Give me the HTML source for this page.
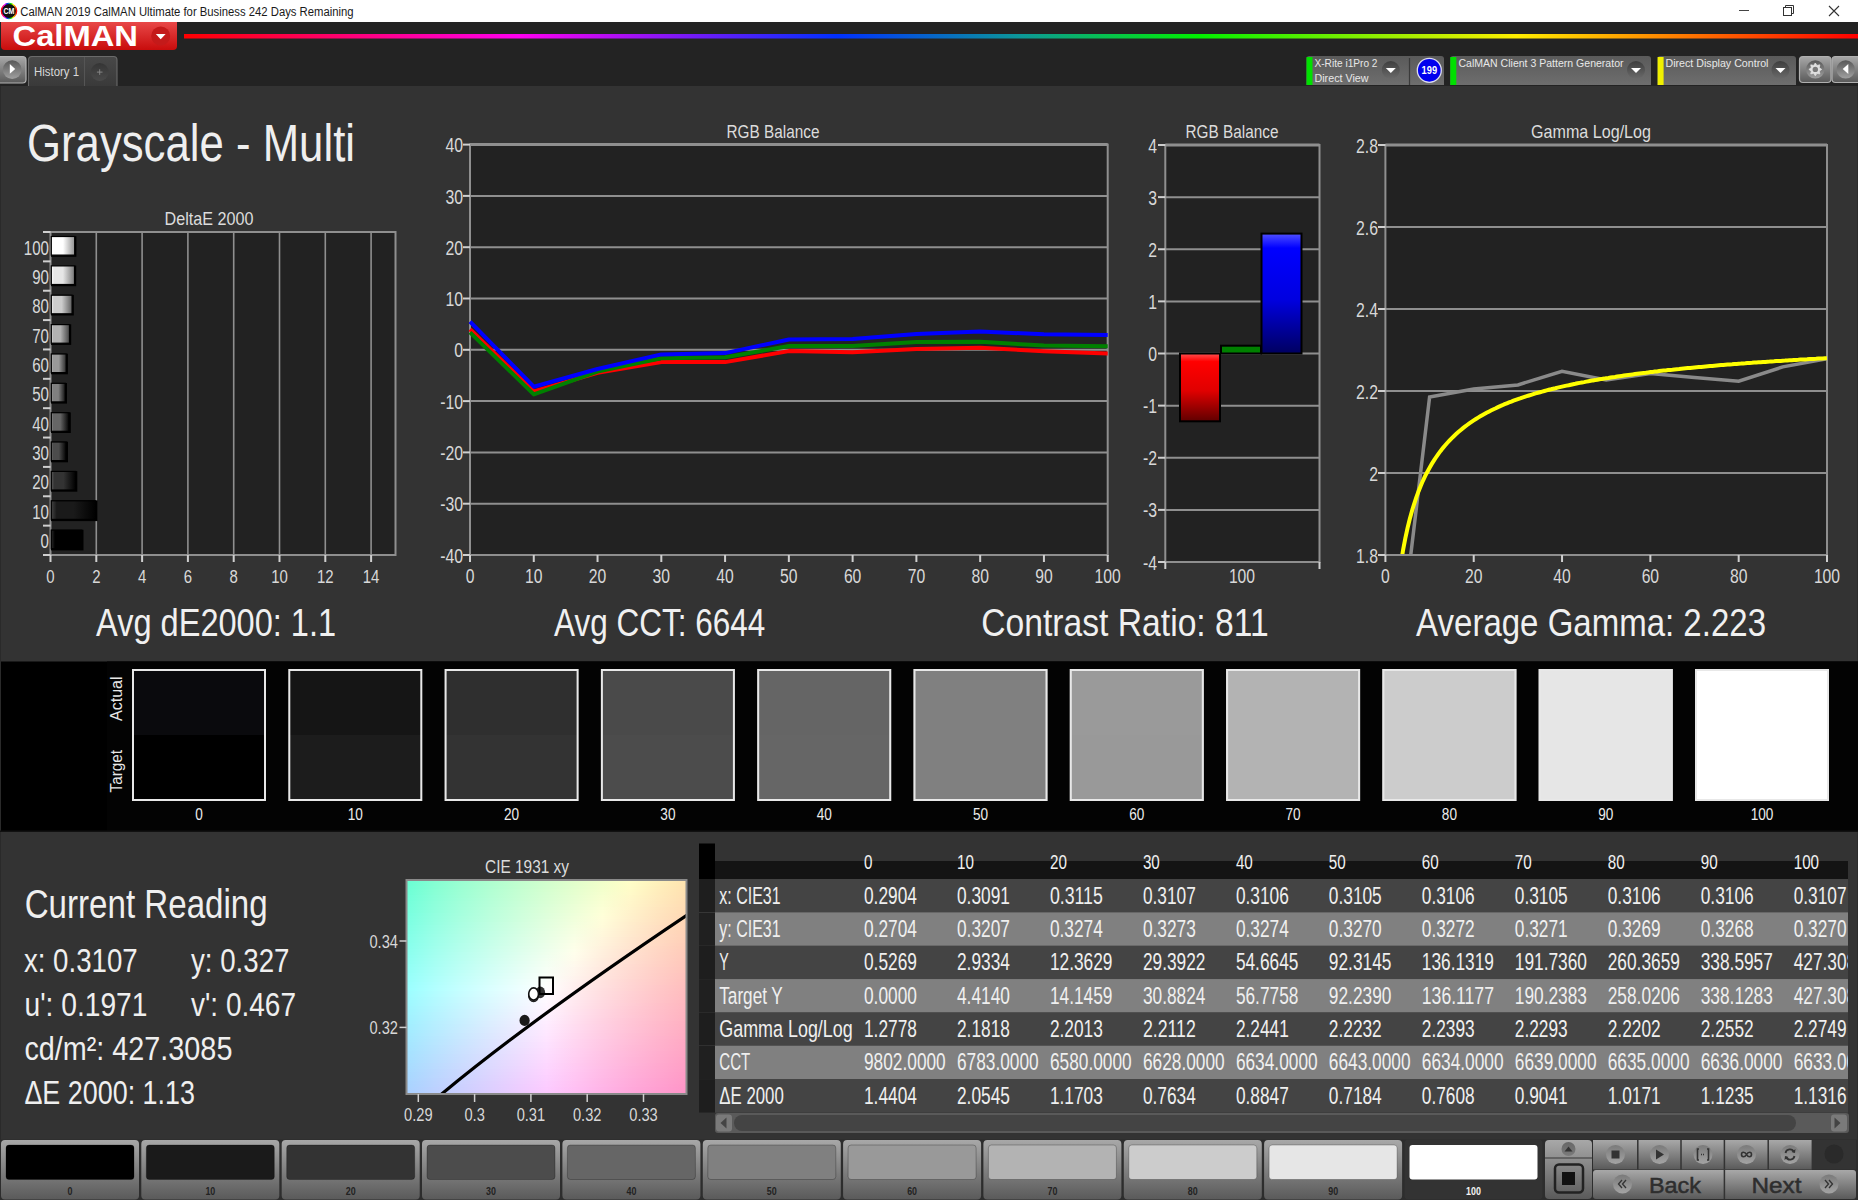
<!DOCTYPE html>
<html><head><meta charset="utf-8"><title>CalMAN</title>
<style>html,body{margin:0;padding:0;background:#232323;overflow:hidden}
svg{display:block;font-family:"Liberation Sans",sans-serif}</style></head>
<body><svg width="1858" height="1200" viewBox="0 0 1858 1200">
<defs>
<linearGradient id="rainbow" x1="0" x2="1" y1="0" y2="0">
<stop offset="0" stop-color="#ff0000"/><stop offset="0.2" stop-color="#ff00f0"/>
<stop offset="0.39" stop-color="#0030ff"/><stop offset="0.5" stop-color="#0c9898"/>
<stop offset="0.606" stop-color="#00f000"/><stop offset="0.796" stop-color="#ffee00"/>
<stop offset="0.89" stop-color="#ff8000"/><stop offset="1" stop-color="#ff0000"/></linearGradient>
<linearGradient id="logo" x1="0" x2="0" y1="0" y2="1">
<stop offset="0" stop-color="#e84848"/><stop offset="1" stop-color="#c80c0c"/></linearGradient>
<linearGradient id="redbar" x1="0" x2="0" y1="0" y2="1">
<stop offset="0" stop-color="#ff5050"/><stop offset="0.12" stop-color="#ff0000"/><stop offset="0.55" stop-color="#e00000"/><stop offset="1" stop-color="#600000"/></linearGradient>
<linearGradient id="bluebar" x1="0" x2="0" y1="0" y2="1">
<stop offset="0" stop-color="#5050ff"/><stop offset="0.12" stop-color="#0000ff"/><stop offset="0.55" stop-color="#0000e0"/><stop offset="1" stop-color="#000060"/></linearGradient>
<linearGradient id="btn" x1="0" x2="0" y1="0" y2="1">
<stop offset="0" stop-color="#a8a8a8"/><stop offset="1" stop-color="#5a5a5a"/></linearGradient>
<linearGradient id="tbox" x1="0" x2="0" y1="0" y2="1">
<stop offset="0" stop-color="#5a5a5a"/><stop offset="1" stop-color="#6e6e6e"/></linearGradient>
<linearGradient id="tabg" x1="0" x2="0" y1="0" y2="1">
<stop offset="0" stop-color="#484848"/><stop offset="1" stop-color="#3a3a3a"/></linearGradient>
<linearGradient id="knob" x1="0" x2="0" y1="0" y2="1">
<stop offset="0" stop-color="#3e3e3e"/><stop offset="1" stop-color="#6a6a6a"/></linearGradient>
<linearGradient id="knobl" x1="0" x2="0" y1="0" y2="1">
<stop offset="0" stop-color="#7a7a7a"/><stop offset="1" stop-color="#b0b0b0"/></linearGradient>
<linearGradient id="hdr" x1="0" x2="0" y1="0" y2="1">
<stop offset="0" stop-color="#333333"/><stop offset="0.5" stop-color="#333333"/><stop offset="0.5" stop-color="#141414"/><stop offset="1" stop-color="#141414"/></linearGradient>
<filter id="blur6" x="-5%" y="-5%" width="110%" height="110%"><feGaussianBlur stdDeviation="6"/></filter>
<clipPath id="cieclip"><rect x="407" y="881" width="279" height="212"/></clipPath>
<clipPath id="gamclip"><rect x="1386" y="146" width="441" height="408"/></clipPath>
<clipPath id="tblclip"><rect x="699" y="843" width="1149" height="272"/></clipPath>
<linearGradient id="knob2" x1="0" x2="0" y1="0" y2="1">
<stop offset="0" stop-color="#585858"/><stop offset="1" stop-color="#a0a0a0"/></linearGradient>
<linearGradient id="knobd" x1="0" x2="0" y1="0" y2="1">
<stop offset="0" stop-color="#353535"/><stop offset="1" stop-color="#4a4a4a"/></linearGradient>
<linearGradient id="knobb" x1="0" x2="0" y1="0" y2="1">
<stop offset="0" stop-color="#7a7a7a"/><stop offset="1" stop-color="#a4a4a4"/></linearGradient>
</defs>
<rect x="0" y="0" width="1858" height="1200" fill="#232323"/>
<rect x="0" y="0" width="1858" height="22" fill="#ffffff"/>
<rect x="0" y="86" width="1858" height="1114" fill="#333333"/>
<rect x="0" y="86" width="1" height="1114" fill="#2a2a2a"/>
<rect x="1857" y="86" width="1" height="1114" fill="#2c2c2c"/>
<circle cx="9" cy="11" r="7.6" fill="#111" stroke="url(#rainbow)" stroke-width="1.4"/>
<text x="9.00" y="13.60" font-size="8.43" fill="#fff" text-anchor="middle" font-weight="bold" textLength="11.00" lengthAdjust="spacingAndGlyphs">CM</text>
<text x="20.30" y="15.70" font-size="12.21" fill="#1a1a1a" textLength="333.30" lengthAdjust="spacingAndGlyphs">CalMAN 2019 CalMAN Ultimate for Business 242 Days Remaining</text>
<line x1="1739" y1="10.5" x2="1749" y2="10.5" stroke="#444" stroke-width="1"/>
<rect x="1783.5" y="7.5" width="8" height="8" fill="none" stroke="#333" stroke-width="1"/>
<path d="M1785.5 7.5 V5.5 H1793.5 V13.5 H1791.5" fill="none" stroke="#333" stroke-width="1"/>
<path d="M1829 6 L1839 16 M1839 6 L1829 16" stroke="#333" stroke-width="1.1"/>
<path d="M1 22 H177 V46 Q177 50 173 50 H5 Q1 50 1 46 Z" fill="url(#logo)"/>
<text x="12.50" y="46.30" font-size="29.94" fill="#ffffff" font-weight="bold" textLength="125.50" lengthAdjust="spacingAndGlyphs">CalMAN</text>
<circle cx="160.7" cy="36" r="9.5" fill="#c41a1a"/>
<path d="M155.8 34 H165.6 L160.7 39.3 Z" fill="#fff"/>
<rect x="184" y="34" width="1674" height="4.5" fill="url(#rainbow)"/>
<rect x="-4" y="56.5" width="30" height="26.5" rx="3.5" fill="url(#btn)" stroke="#b4b4b4" stroke-width="1.2"/>
<circle cx="12.2" cy="69.6" r="9.4" fill="url(#knob2)"/>
<path d="M9.8 64 L15.2 69 L9.8 73.8 Z" fill="#fff"/>
<path d="M28.5 86 V60 Q28.5 56.5 32 56.5 H113.5 Q117 56.5 117 60 V86" fill="url(#tabg)" stroke="#6a6a6a" stroke-width="1.1"/>
<line x1="84.5" y1="57" x2="84.5" y2="86" stroke="#555" stroke-width="1"/>
<text x="34.00" y="75.50" font-size="13.37" fill="#d8d8d8" textLength="45.00" lengthAdjust="spacingAndGlyphs">History 1</text>
<circle cx="99.7" cy="72" r="9" fill="url(#knobd)"/>
<path d="M99.7 69.3 V74.9 M96.9 72.1 H102.5" stroke="#8a8a8a" stroke-width="0.9"/>
<path d="M1306.5 85 V59 Q1306.5 56 1309.5 56 H1441 Q1444 56 1444 59 V85 Z" fill="url(#tbox)"/>
<rect x="1306.5" y="57" width="6" height="28" fill="#00e000"/>
<text x="1314.50" y="67.20" font-size="10.17" fill="#e8e8e8" textLength="63.00" lengthAdjust="spacingAndGlyphs">X-Rite i1Pro 2</text>
<text x="1314.50" y="81.50" font-size="10.17" fill="#e8e8e8" textLength="54.00" lengthAdjust="spacingAndGlyphs">Direct View</text>
<circle cx="1390.8" cy="70" r="9" fill="url(#knob)"/>
<path d="M1385.8 68 H1395.8 L1390.8 73 Z" fill="#fff"/>
<line x1="1409.5" y1="58" x2="1409.5" y2="85" stroke="#3a3a3a" stroke-width="1.2"/>
<circle cx="1429.3" cy="70.3" r="12" fill="#0000ee" stroke="#dde" stroke-width="1.3"/>
<text x="1429.30" y="74.30" font-size="10.90" fill="#fff" text-anchor="middle" font-weight="bold" textLength="15.50" lengthAdjust="spacingAndGlyphs">199</text>
<path d="M1450.3 85 V59 Q1450.3 56 1453.3 56 H1648 Q1651 56 1651 59 V85 Z" fill="url(#tbox)"/>
<rect x="1450.3" y="57" width="6" height="28" fill="#00e000"/>
<text x="1458.50" y="67.20" font-size="10.17" fill="#e8e8e8" textLength="165.00" lengthAdjust="spacingAndGlyphs">CalMAN Client 3 Pattern Generator</text>
<circle cx="1636" cy="70" r="9" fill="url(#knob)"/>
<path d="M1631 68 H1641 L1636 73 Z" fill="#fff"/>
<path d="M1657.6 85 V59 Q1657.6 56 1660.6 56 H1793 Q1796 56 1796 59 V85 Z" fill="url(#tbox)"/>
<rect x="1657.6" y="57" width="6" height="28" fill="#f0f000"/>
<text x="1665.50" y="67.20" font-size="10.17" fill="#e8e8e8" textLength="103.00" lengthAdjust="spacingAndGlyphs">Direct Display Control</text>
<circle cx="1780.5" cy="70" r="9" fill="url(#knob)"/>
<path d="M1775.5 68 H1785.5 L1780.5 73 Z" fill="#fff"/>
<rect x="1799.5" y="56.5" width="31.5" height="26" rx="3.5" fill="url(#btn)" stroke="#b0b0b0" stroke-width="1.2"/>
<circle cx="1815.3" cy="69.4" r="9.2" fill="url(#knob2)"/>
<path d="M1815.30 63.00 L1816.95 65.43 L1819.83 64.87 L1819.27 67.75 L1821.70 69.40 L1819.27 71.05 L1819.83 73.93 L1816.95 73.37 L1815.30 75.80 L1813.65 73.37 L1810.77 73.93 L1811.33 71.05 L1808.90 69.40 L1811.33 67.75 L1810.77 64.87 L1813.65 65.43 Z" fill="#e0e0e0" stroke="#e0e0e0" stroke-width="0.8" stroke-linejoin="round"/>
<circle cx="1815.3" cy="69.4" r="2.7" fill="#7a7a7a"/>
<rect x="1832" y="56.5" width="31" height="26" rx="3.5" fill="url(#btn)" stroke="#b0b0b0" stroke-width="1.2"/>
<circle cx="1845.7" cy="69.4" r="9.2" fill="url(#knob2)"/>
<path d="M1848.3 63.9 V73.9 L1842.7 68.9 Z" fill="#fff"/>
<text x="27.00" y="160.60" font-size="51.45" fill="#efefef" textLength="328.00" lengthAdjust="spacingAndGlyphs">Grayscale - Multi</text>
<text x="209.00" y="224.50" font-size="18.02" fill="#dcdcdc" text-anchor="middle" textLength="89.00" lengthAdjust="spacingAndGlyphs">DeltaE 2000</text>
<rect x="50.5" y="232" width="345.0" height="323" fill="#222222"/>
<line x1="96.3" y1="232" x2="96.3" y2="555" stroke="#8f8f8f" stroke-width="1.6"/>
<line x1="142.1" y1="232" x2="142.1" y2="555" stroke="#8f8f8f" stroke-width="1.6"/>
<line x1="187.89999999999998" y1="232" x2="187.89999999999998" y2="555" stroke="#8f8f8f" stroke-width="1.6"/>
<line x1="233.7" y1="232" x2="233.7" y2="555" stroke="#8f8f8f" stroke-width="1.6"/>
<line x1="279.5" y1="232" x2="279.5" y2="555" stroke="#8f8f8f" stroke-width="1.6"/>
<line x1="325.29999999999995" y1="232" x2="325.29999999999995" y2="555" stroke="#8f8f8f" stroke-width="1.6"/>
<line x1="371.09999999999997" y1="232" x2="371.09999999999997" y2="555" stroke="#8f8f8f" stroke-width="1.6"/>
<rect x="50.5" y="232" width="345.0" height="323" fill="none" stroke="#8f8f8f" stroke-width="2"/>
<linearGradient id="bar100" x1="0" x2="1" y1="0" y2="0"><stop offset="0" stop-color="rgb(255,255,255)"/><stop offset="0.12" stop-color="rgb(255,255,255)"/><stop offset="0.5" stop-color="rgb(255,255,255)"/><stop offset="1" stop-color="rgb(145,145,145)"/></linearGradient>
<rect x="52.0" y="237.2" width="23.4" height="18.6" fill="#000" stroke="#000" stroke-width="2"/>
<rect x="51.3" y="236.5" width="23.4" height="18.6" fill="url(#bar100)" stroke="#000" stroke-width="1.2"/>
<line x1="43" y1="232.0" x2="50.5" y2="232.0" stroke="#cfcfcf" stroke-width="2"/>
<text x="49.00" y="254.58" font-size="19.33" fill="#d8d8d8" text-anchor="end" textLength="25.16" lengthAdjust="spacingAndGlyphs">100</text>
<linearGradient id="bar90" x1="0" x2="1" y1="0" y2="0"><stop offset="0" stop-color="rgb(255,255,255)"/><stop offset="0.12" stop-color="rgb(230,230,230)"/><stop offset="0.5" stop-color="rgb(230,230,230)"/><stop offset="1" stop-color="rgb(120,120,120)"/></linearGradient>
<rect x="52.0" y="266.6" width="23.2" height="18.6" fill="#000" stroke="#000" stroke-width="2"/>
<rect x="51.3" y="265.9" width="23.2" height="18.6" fill="url(#bar90)" stroke="#000" stroke-width="1.2"/>
<line x1="43" y1="261.3636363636364" x2="50.5" y2="261.3636363636364" stroke="#cfcfcf" stroke-width="2"/>
<text x="49.00" y="283.95" font-size="19.33" fill="#d8d8d8" text-anchor="end" textLength="16.77" lengthAdjust="spacingAndGlyphs">90</text>
<linearGradient id="bar80" x1="0" x2="1" y1="0" y2="0"><stop offset="0" stop-color="rgb(244,244,244)"/><stop offset="0.12" stop-color="rgb(204,204,204)"/><stop offset="0.5" stop-color="rgb(204,204,204)"/><stop offset="1" stop-color="rgb(94,94,94)"/></linearGradient>
<rect x="52.0" y="295.9" width="20.8" height="18.6" fill="#000" stroke="#000" stroke-width="2"/>
<rect x="51.3" y="295.2" width="20.8" height="18.6" fill="url(#bar80)" stroke="#000" stroke-width="1.2"/>
<line x1="43" y1="290.72727272727275" x2="50.5" y2="290.72727272727275" stroke="#cfcfcf" stroke-width="2"/>
<text x="49.00" y="313.31" font-size="19.33" fill="#d8d8d8" text-anchor="end" textLength="16.77" lengthAdjust="spacingAndGlyphs">80</text>
<linearGradient id="bar70" x1="0" x2="1" y1="0" y2="0"><stop offset="0" stop-color="rgb(218,218,218)"/><stop offset="0.12" stop-color="rgb(178,178,178)"/><stop offset="0.5" stop-color="rgb(178,178,178)"/><stop offset="1" stop-color="rgb(68,68,68)"/></linearGradient>
<rect x="52.0" y="325.3" width="18.2" height="18.6" fill="#000" stroke="#000" stroke-width="2"/>
<rect x="51.3" y="324.6" width="18.2" height="18.6" fill="url(#bar70)" stroke="#000" stroke-width="1.2"/>
<line x1="43" y1="320.0909090909091" x2="50.5" y2="320.0909090909091" stroke="#cfcfcf" stroke-width="2"/>
<text x="49.00" y="342.67" font-size="19.33" fill="#d8d8d8" text-anchor="end" textLength="16.77" lengthAdjust="spacingAndGlyphs">70</text>
<linearGradient id="bar60" x1="0" x2="1" y1="0" y2="0"><stop offset="0" stop-color="rgb(193,193,193)"/><stop offset="0.12" stop-color="rgb(153,153,153)"/><stop offset="0.5" stop-color="rgb(153,153,153)"/><stop offset="1" stop-color="rgb(43,43,43)"/></linearGradient>
<rect x="52.0" y="354.7" width="14.9" height="18.6" fill="#000" stroke="#000" stroke-width="2"/>
<rect x="51.3" y="354.0" width="14.9" height="18.6" fill="url(#bar60)" stroke="#000" stroke-width="1.2"/>
<line x1="43" y1="349.45454545454544" x2="50.5" y2="349.45454545454544" stroke="#cfcfcf" stroke-width="2"/>
<text x="49.00" y="372.04" font-size="19.33" fill="#d8d8d8" text-anchor="end" textLength="16.77" lengthAdjust="spacingAndGlyphs">60</text>
<linearGradient id="bar50" x1="0" x2="1" y1="0" y2="0"><stop offset="0" stop-color="rgb(168,168,168)"/><stop offset="0.12" stop-color="rgb(128,128,128)"/><stop offset="0.5" stop-color="rgb(128,128,128)"/><stop offset="1" stop-color="rgb(18,18,18)"/></linearGradient>
<rect x="52.0" y="384.0" width="14.0" height="18.6" fill="#000" stroke="#000" stroke-width="2"/>
<rect x="51.3" y="383.3" width="14.0" height="18.6" fill="url(#bar50)" stroke="#000" stroke-width="1.2"/>
<line x1="43" y1="378.8181818181818" x2="50.5" y2="378.8181818181818" stroke="#cfcfcf" stroke-width="2"/>
<text x="49.00" y="401.40" font-size="19.33" fill="#d8d8d8" text-anchor="end" textLength="16.77" lengthAdjust="spacingAndGlyphs">50</text>
<linearGradient id="bar40" x1="0" x2="1" y1="0" y2="0"><stop offset="0" stop-color="rgb(142,142,142)"/><stop offset="0.12" stop-color="rgb(102,102,102)"/><stop offset="0.5" stop-color="rgb(102,102,102)"/><stop offset="1" stop-color="rgb(0,0,0)"/></linearGradient>
<rect x="52.0" y="413.4" width="17.8" height="18.6" fill="#000" stroke="#000" stroke-width="2"/>
<rect x="51.3" y="412.7" width="17.8" height="18.6" fill="url(#bar40)" stroke="#000" stroke-width="1.2"/>
<line x1="43" y1="408.1818181818182" x2="50.5" y2="408.1818181818182" stroke="#cfcfcf" stroke-width="2"/>
<text x="49.00" y="430.76" font-size="19.33" fill="#d8d8d8" text-anchor="end" textLength="16.77" lengthAdjust="spacingAndGlyphs">40</text>
<linearGradient id="bar30" x1="0" x2="1" y1="0" y2="0"><stop offset="0" stop-color="rgb(116,116,116)"/><stop offset="0.12" stop-color="rgb(76,76,76)"/><stop offset="0.5" stop-color="rgb(76,76,76)"/><stop offset="1" stop-color="rgb(0,0,0)"/></linearGradient>
<rect x="52.0" y="442.7" width="15.0" height="18.6" fill="#000" stroke="#000" stroke-width="2"/>
<rect x="51.3" y="442.0" width="15.0" height="18.6" fill="url(#bar30)" stroke="#000" stroke-width="1.2"/>
<line x1="43" y1="437.5454545454545" x2="50.5" y2="437.5454545454545" stroke="#cfcfcf" stroke-width="2"/>
<text x="49.00" y="460.13" font-size="19.33" fill="#d8d8d8" text-anchor="end" textLength="16.77" lengthAdjust="spacingAndGlyphs">30</text>
<linearGradient id="bar20" x1="0" x2="1" y1="0" y2="0"><stop offset="0" stop-color="rgb(91,91,91)"/><stop offset="0.12" stop-color="rgb(51,51,51)"/><stop offset="0.5" stop-color="rgb(51,51,51)"/><stop offset="1" stop-color="rgb(0,0,0)"/></linearGradient>
<rect x="52.0" y="472.1" width="24.3" height="18.6" fill="#000" stroke="#000" stroke-width="2"/>
<rect x="51.3" y="471.4" width="24.3" height="18.6" fill="url(#bar20)" stroke="#000" stroke-width="1.2"/>
<line x1="43" y1="466.9090909090909" x2="50.5" y2="466.9090909090909" stroke="#cfcfcf" stroke-width="2"/>
<text x="49.00" y="489.49" font-size="19.33" fill="#d8d8d8" text-anchor="end" textLength="16.77" lengthAdjust="spacingAndGlyphs">20</text>
<linearGradient id="bar10" x1="0" x2="1" y1="0" y2="0"><stop offset="0" stop-color="rgb(66,66,66)"/><stop offset="0.12" stop-color="rgb(26,26,26)"/><stop offset="0.5" stop-color="rgb(26,26,26)"/><stop offset="1" stop-color="rgb(0,0,0)"/></linearGradient>
<rect x="52.0" y="501.5" width="44.5" height="18.6" fill="#000" stroke="#000" stroke-width="2"/>
<rect x="51.3" y="500.8" width="44.5" height="18.6" fill="url(#bar10)" stroke="#000" stroke-width="1.2"/>
<line x1="43" y1="496.27272727272725" x2="50.5" y2="496.27272727272725" stroke="#cfcfcf" stroke-width="2"/>
<text x="49.00" y="518.85" font-size="19.33" fill="#d8d8d8" text-anchor="end" textLength="16.77" lengthAdjust="spacingAndGlyphs">10</text>
<linearGradient id="bar0" x1="0" x2="1" y1="0" y2="0"><stop offset="0" stop-color="rgb(40,40,40)"/><stop offset="0.12" stop-color="rgb(0,0,0)"/><stop offset="0.5" stop-color="rgb(0,0,0)"/><stop offset="1" stop-color="rgb(0,0,0)"/></linearGradient>
<rect x="52.0" y="530.8" width="30.5" height="18.6" fill="#000" stroke="#000" stroke-width="2"/>
<rect x="51.3" y="530.1" width="30.5" height="18.6" fill="url(#bar0)" stroke="#000" stroke-width="1.2"/>
<line x1="43" y1="525.6363636363636" x2="50.5" y2="525.6363636363636" stroke="#cfcfcf" stroke-width="2"/>
<text x="49.00" y="548.22" font-size="19.33" fill="#d8d8d8" text-anchor="end" textLength="8.39" lengthAdjust="spacingAndGlyphs">0</text>
<line x1="43" y1="555" x2="50.5" y2="555" stroke="#cfcfcf" stroke-width="2"/>
<line x1="50.5" y1="555" x2="50.5" y2="562" stroke="#cfcfcf" stroke-width="2"/>
<text x="50.50" y="582.50" font-size="19.19" fill="#d8d8d8" text-anchor="middle" textLength="8.32" lengthAdjust="spacingAndGlyphs">0</text>
<line x1="96.3" y1="555" x2="96.3" y2="562" stroke="#cfcfcf" stroke-width="2"/>
<text x="96.30" y="582.50" font-size="19.19" fill="#d8d8d8" text-anchor="middle" textLength="8.32" lengthAdjust="spacingAndGlyphs">2</text>
<line x1="142.1" y1="555" x2="142.1" y2="562" stroke="#cfcfcf" stroke-width="2"/>
<text x="142.10" y="582.50" font-size="19.19" fill="#d8d8d8" text-anchor="middle" textLength="8.32" lengthAdjust="spacingAndGlyphs">4</text>
<line x1="187.89999999999998" y1="555" x2="187.89999999999998" y2="562" stroke="#cfcfcf" stroke-width="2"/>
<text x="187.90" y="582.50" font-size="19.19" fill="#d8d8d8" text-anchor="middle" textLength="8.32" lengthAdjust="spacingAndGlyphs">6</text>
<line x1="233.7" y1="555" x2="233.7" y2="562" stroke="#cfcfcf" stroke-width="2"/>
<text x="233.70" y="582.50" font-size="19.19" fill="#d8d8d8" text-anchor="middle" textLength="8.32" lengthAdjust="spacingAndGlyphs">8</text>
<line x1="279.5" y1="555" x2="279.5" y2="562" stroke="#cfcfcf" stroke-width="2"/>
<text x="279.50" y="582.50" font-size="19.19" fill="#d8d8d8" text-anchor="middle" textLength="16.65" lengthAdjust="spacingAndGlyphs">10</text>
<line x1="325.29999999999995" y1="555" x2="325.29999999999995" y2="562" stroke="#cfcfcf" stroke-width="2"/>
<text x="325.30" y="582.50" font-size="19.19" fill="#d8d8d8" text-anchor="middle" textLength="16.65" lengthAdjust="spacingAndGlyphs">12</text>
<line x1="371.09999999999997" y1="555" x2="371.09999999999997" y2="562" stroke="#cfcfcf" stroke-width="2"/>
<text x="371.10" y="582.50" font-size="19.19" fill="#d8d8d8" text-anchor="middle" textLength="16.65" lengthAdjust="spacingAndGlyphs">14</text>
<text x="773.00" y="137.50" font-size="18.02" fill="#dcdcdc" text-anchor="middle" textLength="93.00" lengthAdjust="spacingAndGlyphs">RGB Balance</text>
<rect x="470" y="144.6" width="637.7" height="410.4" fill="#222222"/>
<line x1="470" y1="503.69999999999993" x2="1107.7" y2="503.69999999999993" stroke="#8f8f8f" stroke-width="2"/>
<line x1="470" y1="452.4" x2="1107.7" y2="452.4" stroke="#8f8f8f" stroke-width="2"/>
<line x1="470" y1="401.1" x2="1107.7" y2="401.1" stroke="#8f8f8f" stroke-width="2"/>
<line x1="470" y1="349.79999999999995" x2="1107.7" y2="349.79999999999995" stroke="#8f8f8f" stroke-width="2"/>
<line x1="470" y1="298.5" x2="1107.7" y2="298.5" stroke="#8f8f8f" stroke-width="2"/>
<line x1="470" y1="247.2" x2="1107.7" y2="247.2" stroke="#8f8f8f" stroke-width="2"/>
<line x1="470" y1="195.89999999999998" x2="1107.7" y2="195.89999999999998" stroke="#8f8f8f" stroke-width="2"/>
<rect x="470" y="144.6" width="637.7" height="410.4" fill="none" stroke="#8f8f8f" stroke-width="2"/>
<line x1="470" y1="144.6" x2="1107.7" y2="144.6" stroke="#8f8f8f" stroke-width="3"/>
<line x1="463" y1="555.0" x2="470" y2="555.0" stroke="#cfcfcf" stroke-width="2"/>
<text x="463.00" y="562.60" font-size="19.77" fill="#d8d8d8" text-anchor="end" textLength="22.86" lengthAdjust="spacingAndGlyphs">-40</text>
<line x1="463" y1="503.69999999999993" x2="470" y2="503.69999999999993" stroke="#cfcfcf" stroke-width="2"/>
<text x="463.00" y="511.30" font-size="19.77" fill="#d8d8d8" text-anchor="end" textLength="22.86" lengthAdjust="spacingAndGlyphs">-30</text>
<line x1="463" y1="452.4" x2="470" y2="452.4" stroke="#cfcfcf" stroke-width="2"/>
<text x="463.00" y="460.00" font-size="19.77" fill="#d8d8d8" text-anchor="end" textLength="22.86" lengthAdjust="spacingAndGlyphs">-20</text>
<line x1="463" y1="401.1" x2="470" y2="401.1" stroke="#cfcfcf" stroke-width="2"/>
<text x="463.00" y="408.70" font-size="19.77" fill="#d8d8d8" text-anchor="end" textLength="22.86" lengthAdjust="spacingAndGlyphs">-10</text>
<line x1="463" y1="349.79999999999995" x2="470" y2="349.79999999999995" stroke="#cfcfcf" stroke-width="2"/>
<text x="463.00" y="357.40" font-size="19.77" fill="#d8d8d8" text-anchor="end" textLength="8.79" lengthAdjust="spacingAndGlyphs">0</text>
<line x1="463" y1="298.5" x2="470" y2="298.5" stroke="#cfcfcf" stroke-width="2"/>
<text x="463.00" y="306.10" font-size="19.77" fill="#d8d8d8" text-anchor="end" textLength="17.59" lengthAdjust="spacingAndGlyphs">10</text>
<line x1="463" y1="247.2" x2="470" y2="247.2" stroke="#cfcfcf" stroke-width="2"/>
<text x="463.00" y="254.80" font-size="19.77" fill="#d8d8d8" text-anchor="end" textLength="17.59" lengthAdjust="spacingAndGlyphs">20</text>
<line x1="463" y1="195.89999999999998" x2="470" y2="195.89999999999998" stroke="#cfcfcf" stroke-width="2"/>
<text x="463.00" y="203.50" font-size="19.77" fill="#d8d8d8" text-anchor="end" textLength="17.59" lengthAdjust="spacingAndGlyphs">30</text>
<line x1="463" y1="144.6" x2="470" y2="144.6" stroke="#cfcfcf" stroke-width="2"/>
<text x="463.00" y="152.20" font-size="19.77" fill="#d8d8d8" text-anchor="end" textLength="17.59" lengthAdjust="spacingAndGlyphs">40</text>
<line x1="470.0" y1="555" x2="470.0" y2="562" stroke="#cfcfcf" stroke-width="2"/>
<text x="470.00" y="582.50" font-size="19.62" fill="#d8d8d8" text-anchor="middle" textLength="8.73" lengthAdjust="spacingAndGlyphs">0</text>
<line x1="533.77" y1="555" x2="533.77" y2="562" stroke="#cfcfcf" stroke-width="2"/>
<text x="533.77" y="582.50" font-size="19.62" fill="#d8d8d8" text-anchor="middle" textLength="17.46" lengthAdjust="spacingAndGlyphs">10</text>
<line x1="597.54" y1="555" x2="597.54" y2="562" stroke="#cfcfcf" stroke-width="2"/>
<text x="597.54" y="582.50" font-size="19.62" fill="#d8d8d8" text-anchor="middle" textLength="17.46" lengthAdjust="spacingAndGlyphs">20</text>
<line x1="661.31" y1="555" x2="661.31" y2="562" stroke="#cfcfcf" stroke-width="2"/>
<text x="661.31" y="582.50" font-size="19.62" fill="#d8d8d8" text-anchor="middle" textLength="17.46" lengthAdjust="spacingAndGlyphs">30</text>
<line x1="725.08" y1="555" x2="725.08" y2="562" stroke="#cfcfcf" stroke-width="2"/>
<text x="725.08" y="582.50" font-size="19.62" fill="#d8d8d8" text-anchor="middle" textLength="17.46" lengthAdjust="spacingAndGlyphs">40</text>
<line x1="788.85" y1="555" x2="788.85" y2="562" stroke="#cfcfcf" stroke-width="2"/>
<text x="788.85" y="582.50" font-size="19.62" fill="#d8d8d8" text-anchor="middle" textLength="17.46" lengthAdjust="spacingAndGlyphs">50</text>
<line x1="852.62" y1="555" x2="852.62" y2="562" stroke="#cfcfcf" stroke-width="2"/>
<text x="852.62" y="582.50" font-size="19.62" fill="#d8d8d8" text-anchor="middle" textLength="17.46" lengthAdjust="spacingAndGlyphs">60</text>
<line x1="916.39" y1="555" x2="916.39" y2="562" stroke="#cfcfcf" stroke-width="2"/>
<text x="916.39" y="582.50" font-size="19.62" fill="#d8d8d8" text-anchor="middle" textLength="17.46" lengthAdjust="spacingAndGlyphs">70</text>
<line x1="980.1600000000001" y1="555" x2="980.1600000000001" y2="562" stroke="#cfcfcf" stroke-width="2"/>
<text x="980.16" y="582.50" font-size="19.62" fill="#d8d8d8" text-anchor="middle" textLength="17.46" lengthAdjust="spacingAndGlyphs">80</text>
<line x1="1043.93" y1="555" x2="1043.93" y2="562" stroke="#cfcfcf" stroke-width="2"/>
<text x="1043.93" y="582.50" font-size="19.62" fill="#d8d8d8" text-anchor="middle" textLength="17.46" lengthAdjust="spacingAndGlyphs">90</text>
<line x1="1107.7" y1="555" x2="1107.7" y2="562" stroke="#cfcfcf" stroke-width="2"/>
<text x="1107.70" y="582.50" font-size="19.62" fill="#d8d8d8" text-anchor="middle" textLength="26.19" lengthAdjust="spacingAndGlyphs">100</text>
<polyline points="470.0,329.3 533.8,391.4 597.5,372.9 661.3,362.1 725.1,362.1 788.9,351.1 852.6,352.2 916.4,349.1 980.2,347.7 1043.9,351.2 1107.7,353.5" fill="none" stroke="#ff0000" stroke-width="4" stroke-linejoin="round"/>
<polyline points="470.0,332.4 533.8,394.4 597.5,371.6 661.3,358.3 725.1,357.3 788.9,346.0 852.6,346.0 916.4,342.1 980.2,341.7 1043.9,345.6 1107.7,346.3" fill="none" stroke="#008000" stroke-width="4" stroke-linejoin="round"/>
<polyline points="470.0,321.6 533.8,386.7 597.5,369.0 661.3,354.4 725.1,353.1 788.9,339.5 852.6,339.0 916.4,334.0 980.2,331.5 1043.9,334.3 1107.7,335.0" fill="none" stroke="#0000ff" stroke-width="4" stroke-linejoin="round"/>
<text x="1232.00" y="137.50" font-size="18.02" fill="#dcdcdc" text-anchor="middle" textLength="93.00" lengthAdjust="spacingAndGlyphs">RGB Balance</text>
<rect x="1165.3" y="145" width="154.20000000000005" height="417" fill="#222222"/>
<line x1="1165.3" y1="509.875" x2="1319.5" y2="509.875" stroke="#8f8f8f" stroke-width="2"/>
<line x1="1165.3" y1="457.75" x2="1319.5" y2="457.75" stroke="#8f8f8f" stroke-width="2"/>
<line x1="1165.3" y1="405.625" x2="1319.5" y2="405.625" stroke="#8f8f8f" stroke-width="2"/>
<line x1="1165.3" y1="353.5" x2="1319.5" y2="353.5" stroke="#8f8f8f" stroke-width="2"/>
<line x1="1165.3" y1="301.375" x2="1319.5" y2="301.375" stroke="#8f8f8f" stroke-width="2"/>
<line x1="1165.3" y1="249.25" x2="1319.5" y2="249.25" stroke="#8f8f8f" stroke-width="2"/>
<line x1="1165.3" y1="197.125" x2="1319.5" y2="197.125" stroke="#8f8f8f" stroke-width="2"/>
<rect x="1165.3" y="145" width="154.20000000000005" height="417" fill="none" stroke="#8f8f8f" stroke-width="2"/>
<line x1="1165.3" y1="145" x2="1319.5" y2="145" stroke="#8f8f8f" stroke-width="3"/>
<line x1="1158" y1="562.0" x2="1165.3" y2="562.0" stroke="#cfcfcf" stroke-width="2"/>
<text x="1157.00" y="569.60" font-size="19.77" fill="#d8d8d8" text-anchor="end" textLength="14.06" lengthAdjust="spacingAndGlyphs">-4</text>
<line x1="1158" y1="509.875" x2="1165.3" y2="509.875" stroke="#cfcfcf" stroke-width="2"/>
<text x="1157.00" y="517.48" font-size="19.77" fill="#d8d8d8" text-anchor="end" textLength="14.06" lengthAdjust="spacingAndGlyphs">-3</text>
<line x1="1158" y1="457.75" x2="1165.3" y2="457.75" stroke="#cfcfcf" stroke-width="2"/>
<text x="1157.00" y="465.35" font-size="19.77" fill="#d8d8d8" text-anchor="end" textLength="14.06" lengthAdjust="spacingAndGlyphs">-2</text>
<line x1="1158" y1="405.625" x2="1165.3" y2="405.625" stroke="#cfcfcf" stroke-width="2"/>
<text x="1157.00" y="413.23" font-size="19.77" fill="#d8d8d8" text-anchor="end" textLength="14.06" lengthAdjust="spacingAndGlyphs">-1</text>
<line x1="1158" y1="353.5" x2="1165.3" y2="353.5" stroke="#cfcfcf" stroke-width="2"/>
<text x="1157.00" y="361.10" font-size="19.77" fill="#d8d8d8" text-anchor="end" textLength="8.79" lengthAdjust="spacingAndGlyphs">0</text>
<line x1="1158" y1="301.375" x2="1165.3" y2="301.375" stroke="#cfcfcf" stroke-width="2"/>
<text x="1157.00" y="308.98" font-size="19.77" fill="#d8d8d8" text-anchor="end" textLength="8.79" lengthAdjust="spacingAndGlyphs">1</text>
<line x1="1158" y1="249.25" x2="1165.3" y2="249.25" stroke="#cfcfcf" stroke-width="2"/>
<text x="1157.00" y="256.85" font-size="19.77" fill="#d8d8d8" text-anchor="end" textLength="8.79" lengthAdjust="spacingAndGlyphs">2</text>
<line x1="1158" y1="197.125" x2="1165.3" y2="197.125" stroke="#cfcfcf" stroke-width="2"/>
<text x="1157.00" y="204.72" font-size="19.77" fill="#d8d8d8" text-anchor="end" textLength="8.79" lengthAdjust="spacingAndGlyphs">3</text>
<line x1="1158" y1="145.0" x2="1165.3" y2="145.0" stroke="#cfcfcf" stroke-width="2"/>
<text x="1157.00" y="152.60" font-size="19.77" fill="#d8d8d8" text-anchor="end" textLength="8.79" lengthAdjust="spacingAndGlyphs">4</text>
<line x1="1165.3" y1="562" x2="1165.3" y2="569" stroke="#cfcfcf" stroke-width="2"/>
<line x1="1319.5" y1="562" x2="1319.5" y2="569" stroke="#cfcfcf" stroke-width="2"/>
<text x="1242.00" y="582.50" font-size="19.62" fill="#d8d8d8" text-anchor="middle" textLength="26.19" lengthAdjust="spacingAndGlyphs">100</text>
<rect x="1180" y="353.5" width="40" height="67.8" fill="url(#redbar)" stroke="#000" stroke-width="2"/>
<rect x="1221" y="345.7" width="40" height="7.8" fill="#008000" stroke="#000" stroke-width="2"/>
<rect x="1261.5" y="233.6" width="40" height="119.9" fill="url(#bluebar)" stroke="#000" stroke-width="2"/>
<text x="1591.00" y="137.50" font-size="18.02" fill="#dcdcdc" text-anchor="middle" textLength="120.00" lengthAdjust="spacingAndGlyphs">Gamma Log/Log</text>
<rect x="1385.4" y="145" width="441.5999999999999" height="410" fill="#222222"/>
<line x1="1385.4" y1="473.0" x2="1827" y2="473.0" stroke="#8f8f8f" stroke-width="2"/>
<line x1="1385.4" y1="390.99999999999994" x2="1827" y2="390.99999999999994" stroke="#8f8f8f" stroke-width="2"/>
<line x1="1385.4" y1="309.00000000000006" x2="1827" y2="309.00000000000006" stroke="#8f8f8f" stroke-width="2"/>
<line x1="1385.4" y1="227.0" x2="1827" y2="227.0" stroke="#8f8f8f" stroke-width="2"/>
<rect x="1385.4" y="145" width="441.5999999999999" height="410" fill="none" stroke="#8f8f8f" stroke-width="2"/>
<line x1="1385.4" y1="145" x2="1827" y2="145" stroke="#8f8f8f" stroke-width="3"/>
<line x1="1378" y1="555.0" x2="1385.4" y2="555.0" stroke="#cfcfcf" stroke-width="2"/>
<text x="1378.00" y="562.60" font-size="19.77" fill="#d8d8d8" text-anchor="end" textLength="21.98" lengthAdjust="spacingAndGlyphs">1.8</text>
<line x1="1378" y1="473.0" x2="1385.4" y2="473.0" stroke="#cfcfcf" stroke-width="2"/>
<text x="1378.00" y="480.60" font-size="19.77" fill="#d8d8d8" text-anchor="end" textLength="8.79" lengthAdjust="spacingAndGlyphs">2</text>
<line x1="1378" y1="390.99999999999994" x2="1385.4" y2="390.99999999999994" stroke="#cfcfcf" stroke-width="2"/>
<text x="1378.00" y="398.60" font-size="19.77" fill="#d8d8d8" text-anchor="end" textLength="21.98" lengthAdjust="spacingAndGlyphs">2.2</text>
<line x1="1378" y1="309.00000000000006" x2="1385.4" y2="309.00000000000006" stroke="#cfcfcf" stroke-width="2"/>
<text x="1378.00" y="316.60" font-size="19.77" fill="#d8d8d8" text-anchor="end" textLength="21.98" lengthAdjust="spacingAndGlyphs">2.4</text>
<line x1="1378" y1="227.0" x2="1385.4" y2="227.0" stroke="#cfcfcf" stroke-width="2"/>
<text x="1378.00" y="234.60" font-size="19.77" fill="#d8d8d8" text-anchor="end" textLength="21.98" lengthAdjust="spacingAndGlyphs">2.6</text>
<line x1="1378" y1="145.0000000000001" x2="1385.4" y2="145.0000000000001" stroke="#cfcfcf" stroke-width="2"/>
<text x="1378.00" y="152.60" font-size="19.77" fill="#d8d8d8" text-anchor="end" textLength="21.98" lengthAdjust="spacingAndGlyphs">2.8</text>
<line x1="1385.4" y1="555" x2="1385.4" y2="562" stroke="#cfcfcf" stroke-width="2"/>
<text x="1385.40" y="582.50" font-size="19.62" fill="#d8d8d8" text-anchor="middle" textLength="8.73" lengthAdjust="spacingAndGlyphs">0</text>
<line x1="1473.72" y1="555" x2="1473.72" y2="562" stroke="#cfcfcf" stroke-width="2"/>
<text x="1473.72" y="582.50" font-size="19.62" fill="#d8d8d8" text-anchor="middle" textLength="17.46" lengthAdjust="spacingAndGlyphs">20</text>
<line x1="1562.04" y1="555" x2="1562.04" y2="562" stroke="#cfcfcf" stroke-width="2"/>
<text x="1562.04" y="582.50" font-size="19.62" fill="#d8d8d8" text-anchor="middle" textLength="17.46" lengthAdjust="spacingAndGlyphs">40</text>
<line x1="1650.3600000000001" y1="555" x2="1650.3600000000001" y2="562" stroke="#cfcfcf" stroke-width="2"/>
<text x="1650.36" y="582.50" font-size="19.62" fill="#d8d8d8" text-anchor="middle" textLength="17.46" lengthAdjust="spacingAndGlyphs">60</text>
<line x1="1738.68" y1="555" x2="1738.68" y2="562" stroke="#cfcfcf" stroke-width="2"/>
<text x="1738.68" y="582.50" font-size="19.62" fill="#d8d8d8" text-anchor="middle" textLength="17.46" lengthAdjust="spacingAndGlyphs">80</text>
<line x1="1827.0" y1="555" x2="1827.0" y2="562" stroke="#cfcfcf" stroke-width="2"/>
<text x="1827.00" y="582.50" font-size="19.62" fill="#d8d8d8" text-anchor="middle" textLength="26.19" lengthAdjust="spacingAndGlyphs">100</text>
<g clip-path="url(#gamclip)">
<polyline points="1385.4,769.1 1429.6,398.5 1473.7,390.5 1517.9,386.4 1562.0,372.9 1606.2,381.5 1650.4,374.9 1694.5,379.0 1738.7,382.7 1782.8,368.4 1827.0,360.3" fill="none" stroke="#8a8a8a" stroke-width="3.5" transform="translate(0 -1.5)"/>
<polyline points="1389.8,690.0 1392.0,649.7 1394.2,620.4 1396.4,597.5 1398.6,578.8 1400.9,563.2 1403.1,549.9 1405.3,538.4 1407.5,528.3 1409.7,519.3 1411.9,511.2 1414.1,504.0 1416.3,497.4 1418.5,491.4 1420.7,485.9 1422.9,480.8 1425.1,476.1 1427.4,471.8 1429.6,467.7 1431.8,463.9 1434.0,460.4 1436.2,457.0 1438.4,453.9 1440.6,450.9 1442.8,448.1 1445.0,445.5 1447.2,443.0 1449.4,440.6 1451.6,438.3 1453.8,436.2 1456.1,434.1 1458.3,432.1 1460.5,430.2 1462.7,428.4 1464.9,426.7 1467.1,425.0 1469.3,423.4 1471.5,421.9 1473.7,420.4 1475.9,419.0 1478.1,417.6 1480.3,416.3 1482.6,415.0 1484.8,413.8 1487.0,412.6 1489.2,411.4 1491.4,410.3 1493.6,409.2 1495.8,408.2 1498.0,407.1 1500.2,406.1 1502.4,405.2 1504.6,404.2 1506.8,403.3 1509.0,402.4 1511.3,401.6 1513.5,400.7 1515.7,399.9 1517.9,399.1 1520.1,398.4 1522.3,397.6 1524.5,396.9 1526.7,396.2 1528.9,395.5 1531.1,394.8 1533.3,394.1 1535.5,393.4 1537.8,392.8 1540.0,392.2 1542.2,391.6 1544.4,391.0 1546.6,390.4 1548.8,389.8 1551.0,389.3 1553.2,388.7 1555.4,388.2 1557.6,387.6 1559.8,387.1 1562.0,386.6 1564.2,386.1 1566.5,385.6 1568.7,385.2 1570.9,384.7 1573.1,384.2 1575.3,383.8 1577.5,383.3 1579.7,382.9 1581.9,382.5 1584.1,382.1 1586.3,381.6 1588.5,381.2 1590.7,380.8 1593.0,380.4 1595.2,380.1 1597.4,379.7 1599.6,379.3 1601.8,378.9 1604.0,378.6 1606.2,378.2 1608.4,377.9 1610.6,377.5 1612.8,377.2 1615.0,376.9 1617.2,376.5 1619.4,376.2 1621.7,375.9 1623.9,375.6 1626.1,375.3 1628.3,375.0 1630.5,374.7 1632.7,374.4 1634.9,374.1 1637.1,373.8 1639.3,373.5 1641.5,373.2 1643.7,372.9 1645.9,372.7 1648.2,372.4 1650.4,372.1 1652.6,371.9 1654.8,371.6 1657.0,371.4 1659.2,371.1 1661.4,370.8 1663.6,370.6 1665.8,370.4 1668.0,370.1 1670.2,369.9 1672.4,369.7 1674.6,369.4 1676.9,369.2 1679.1,369.0 1681.3,368.7 1683.5,368.5 1685.7,368.3 1687.9,368.1 1690.1,367.9 1692.3,367.7 1694.5,367.5 1696.7,367.3 1698.9,367.1 1701.1,366.9 1703.4,366.7 1705.6,366.5 1707.8,366.3 1710.0,366.1 1712.2,365.9 1714.4,365.7 1716.6,365.5 1718.8,365.3 1721.0,365.1 1723.2,365.0 1725.4,364.8 1727.6,364.6 1729.8,364.4 1732.1,364.3 1734.3,364.1 1736.5,363.9 1738.7,363.7 1740.9,363.6 1743.1,363.4 1745.3,363.3 1747.5,363.1 1749.7,362.9 1751.9,362.8 1754.1,362.6 1756.3,362.5 1758.6,362.3 1760.8,362.2 1763.0,362.0 1765.2,361.9 1767.4,361.7 1769.6,361.6 1771.8,361.4 1774.0,361.3 1776.2,361.1 1778.4,361.0 1780.6,360.9 1782.8,360.7 1785.0,360.6 1787.3,360.4 1789.5,360.3 1791.7,360.2 1793.9,360.0 1796.1,359.9 1798.3,359.8 1800.5,359.6 1802.7,359.5 1804.9,359.4 1807.1,359.3 1809.3,359.1 1811.5,359.0 1813.8,358.9 1816.0,358.8 1818.2,358.6 1820.4,358.5 1822.6,358.4 1824.8,358.3 1827.0,358.2" fill="none" stroke="#ffff00" stroke-width="4"/>
</g>
<text x="96.10" y="635.80" font-size="38.81" fill="#f0f0f0" textLength="240.00" lengthAdjust="spacingAndGlyphs">Avg dE2000: 1.1</text>
<text x="554.10" y="635.80" font-size="38.81" fill="#f0f0f0" textLength="211.20" lengthAdjust="spacingAndGlyphs">Avg CCT: 6644</text>
<text x="981.30" y="635.80" font-size="38.81" fill="#f0f0f0" textLength="287.40" lengthAdjust="spacingAndGlyphs">Contrast Ratio: 811</text>
<text x="1416.10" y="635.80" font-size="38.81" fill="#f0f0f0" textLength="349.90" lengthAdjust="spacingAndGlyphs">Average Gamma: 2.223</text>
<rect x="1" y="661.5" width="1857" height="169.5" fill="#000000"/>
<rect x="107" y="661.5" width="1751" height="169.5" fill="#030303"/>
<text transform="translate(122.3 721) rotate(-90)" font-size="15.8" fill="#e8e8e8" textLength="44.6" lengthAdjust="spacingAndGlyphs">Actual</text>
<text transform="translate(122.3 792.5) rotate(-90)" font-size="15.8" fill="#e8e8e8" textLength="42.5" lengthAdjust="spacingAndGlyphs">Target</text>
<rect x="132.0" y="669" width="134" height="66" fill="#0a0a0d"/>
<rect x="132.0" y="735" width="134" height="66" fill="#000000"/>
<rect x="133.0" y="670" width="132" height="130" fill="none" stroke="#e8e8e8" stroke-width="2"/>
<text x="199.00" y="819.80" font-size="15.99" fill="#ececec" text-anchor="middle" textLength="7.56" lengthAdjust="spacingAndGlyphs">0</text>
<rect x="288.3" y="669" width="134" height="66" fill="#151515"/>
<rect x="288.3" y="735" width="134" height="66" fill="#1c1c1c"/>
<rect x="289.3" y="670" width="132" height="130" fill="none" stroke="#e8e8e8" stroke-width="2"/>
<text x="355.30" y="819.80" font-size="15.99" fill="#ececec" text-anchor="middle" textLength="15.12" lengthAdjust="spacingAndGlyphs">10</text>
<rect x="444.6" y="669" width="134" height="66" fill="#2f2f2f"/>
<rect x="444.6" y="735" width="134" height="66" fill="#333333"/>
<rect x="445.6" y="670" width="132" height="130" fill="none" stroke="#e8e8e8" stroke-width="2"/>
<text x="511.60" y="819.80" font-size="15.99" fill="#ececec" text-anchor="middle" textLength="15.12" lengthAdjust="spacingAndGlyphs">20</text>
<rect x="600.9" y="669" width="134" height="66" fill="#4a4a4a"/>
<rect x="600.9" y="735" width="134" height="66" fill="#4c4c4c"/>
<rect x="601.9" y="670" width="132" height="130" fill="none" stroke="#e8e8e8" stroke-width="2"/>
<text x="667.90" y="819.80" font-size="15.99" fill="#ececec" text-anchor="middle" textLength="15.12" lengthAdjust="spacingAndGlyphs">30</text>
<rect x="757.2" y="669" width="134" height="66" fill="#656565"/>
<rect x="757.2" y="735" width="134" height="66" fill="#666666"/>
<rect x="758.2" y="670" width="132" height="130" fill="none" stroke="#e8e8e8" stroke-width="2"/>
<text x="824.20" y="819.80" font-size="15.99" fill="#ececec" text-anchor="middle" textLength="15.12" lengthAdjust="spacingAndGlyphs">40</text>
<rect x="913.5" y="669" width="134" height="66" fill="#808080"/>
<rect x="913.5" y="735" width="134" height="66" fill="#808080"/>
<rect x="914.5" y="670" width="132" height="130" fill="none" stroke="#e8e8e8" stroke-width="2"/>
<text x="980.50" y="819.80" font-size="15.99" fill="#ececec" text-anchor="middle" textLength="15.12" lengthAdjust="spacingAndGlyphs">50</text>
<rect x="1069.8" y="669" width="134" height="66" fill="#9a9a9a"/>
<rect x="1069.8" y="735" width="134" height="66" fill="#999999"/>
<rect x="1070.8" y="670" width="132" height="130" fill="none" stroke="#e8e8e8" stroke-width="2"/>
<text x="1136.80" y="819.80" font-size="15.99" fill="#ececec" text-anchor="middle" textLength="15.12" lengthAdjust="spacingAndGlyphs">60</text>
<rect x="1226.1" y="669" width="134" height="66" fill="#b3b3b3"/>
<rect x="1226.1" y="735" width="134" height="66" fill="#b3b3b3"/>
<rect x="1227.1" y="670" width="132" height="130" fill="none" stroke="#e8e8e8" stroke-width="2"/>
<text x="1293.10" y="819.80" font-size="15.99" fill="#ececec" text-anchor="middle" textLength="15.12" lengthAdjust="spacingAndGlyphs">70</text>
<rect x="1382.4" y="669" width="134" height="66" fill="#cccccc"/>
<rect x="1382.4" y="735" width="134" height="66" fill="#cccccc"/>
<rect x="1383.4" y="670" width="132" height="130" fill="none" stroke="#e8e8e8" stroke-width="2"/>
<text x="1449.40" y="819.80" font-size="15.99" fill="#ececec" text-anchor="middle" textLength="15.12" lengthAdjust="spacingAndGlyphs">80</text>
<rect x="1538.7" y="669" width="134" height="66" fill="#e6e6e6"/>
<rect x="1538.7" y="735" width="134" height="66" fill="#e6e6e6"/>
<rect x="1539.7" y="670" width="132" height="130" fill="none" stroke="#e8e8e8" stroke-width="2"/>
<text x="1605.70" y="819.80" font-size="15.99" fill="#ececec" text-anchor="middle" textLength="15.12" lengthAdjust="spacingAndGlyphs">90</text>
<rect x="1695.0" y="669" width="134" height="66" fill="#ffffff"/>
<rect x="1695.0" y="735" width="134" height="66" fill="#ffffff"/>
<rect x="1696.0" y="670" width="132" height="130" fill="none" stroke="#e8e8e8" stroke-width="2"/>
<text x="1762.00" y="819.80" font-size="15.99" fill="#ececec" text-anchor="middle" textLength="22.67" lengthAdjust="spacingAndGlyphs">100</text>
<rect x="0" y="830.5" width="1858" height="1.5" fill="#111"/>
<text x="24.70" y="917.80" font-size="40.70" fill="#efefef" textLength="243.00" lengthAdjust="spacingAndGlyphs">Current Reading</text>
<text x="23.90" y="972.40" font-size="33.28" fill="#efefef" textLength="113.80" lengthAdjust="spacingAndGlyphs">x: 0.3107</text>
<text x="191.00" y="972.40" font-size="33.28" fill="#efefef" textLength="98.50" lengthAdjust="spacingAndGlyphs">y: 0.327</text>
<text x="24.50" y="1016.40" font-size="33.28" fill="#efefef" textLength="123.00" lengthAdjust="spacingAndGlyphs">u': 0.1971</text>
<text x="191.00" y="1016.40" font-size="33.28" fill="#efefef" textLength="105.00" lengthAdjust="spacingAndGlyphs">v': 0.467</text>
<text x="24.40" y="1059.70" font-size="33.28" fill="#efefef" textLength="208.00" lengthAdjust="spacingAndGlyphs">cd/m²: 427.3085</text>
<text x="24.40" y="1103.60" font-size="33.28" fill="#efefef" textLength="170.60" lengthAdjust="spacingAndGlyphs">ΔE 2000: 1.13</text>
<text x="527.00" y="873.00" font-size="18.02" fill="#dcdcdc" text-anchor="middle" textLength="84.00" lengthAdjust="spacingAndGlyphs">CIE 1931 xy</text>
<g clip-path="url(#cieclip)">
<linearGradient id="cier0" x1="0" x2="1" y1="0" y2="0"><stop offset="0.00" stop-color="#69ffd3"/><stop offset="0.10" stop-color="#84ffd2"/><stop offset="0.20" stop-color="#9affd1"/><stop offset="0.30" stop-color="#aeffcf"/><stop offset="0.40" stop-color="#c0ffce"/><stop offset="0.50" stop-color="#d1ffcc"/><stop offset="0.60" stop-color="#e1ffcb"/><stop offset="0.70" stop-color="#f0ffc9"/><stop offset="0.80" stop-color="#ffffc7"/><stop offset="0.90" stop-color="#fff1ba"/><stop offset="1.00" stop-color="#ffe4af"/></linearGradient>
<rect x="406.5" y="880" width="280.0" height="3.6" fill="url(#cier0)"/>
<linearGradient id="cier1" x1="0" x2="1" y1="0" y2="0"><stop offset="0.00" stop-color="#6affd4"/><stop offset="0.10" stop-color="#85ffd3"/><stop offset="0.20" stop-color="#9cffd2"/><stop offset="0.30" stop-color="#afffd0"/><stop offset="0.40" stop-color="#c1ffcf"/><stop offset="0.50" stop-color="#d2ffce"/><stop offset="0.60" stop-color="#e2ffcc"/><stop offset="0.70" stop-color="#f2ffcb"/><stop offset="0.80" stop-color="#fffdc8"/><stop offset="0.90" stop-color="#fff0bb"/><stop offset="1.00" stop-color="#ffe3af"/></linearGradient>
<rect x="406.5" y="883" width="280.0" height="3.6" fill="url(#cier1)"/>
<linearGradient id="cier2" x1="0" x2="1" y1="0" y2="0"><stop offset="0.00" stop-color="#6cffd5"/><stop offset="0.10" stop-color="#86ffd4"/><stop offset="0.20" stop-color="#9dffd3"/><stop offset="0.30" stop-color="#b0ffd2"/><stop offset="0.40" stop-color="#c2ffd0"/><stop offset="0.50" stop-color="#d3ffcf"/><stop offset="0.60" stop-color="#e3ffce"/><stop offset="0.70" stop-color="#f3ffcc"/><stop offset="0.80" stop-color="#fffcc8"/><stop offset="0.90" stop-color="#ffeebb"/><stop offset="1.00" stop-color="#ffe2b0"/></linearGradient>
<rect x="406.5" y="886" width="280.0" height="3.6" fill="url(#cier2)"/>
<linearGradient id="cier3" x1="0" x2="1" y1="0" y2="0"><stop offset="0.00" stop-color="#6dffd6"/><stop offset="0.10" stop-color="#88ffd5"/><stop offset="0.20" stop-color="#9effd4"/><stop offset="0.30" stop-color="#b2ffd3"/><stop offset="0.40" stop-color="#c4ffd2"/><stop offset="0.50" stop-color="#d5ffd0"/><stop offset="0.60" stop-color="#e5ffcf"/><stop offset="0.70" stop-color="#f4ffcd"/><stop offset="0.80" stop-color="#fffbc8"/><stop offset="0.90" stop-color="#ffedbc"/><stop offset="1.00" stop-color="#ffe1b0"/></linearGradient>
<rect x="406.5" y="889" width="280.0" height="3.6" fill="url(#cier3)"/>
<linearGradient id="cier4" x1="0" x2="1" y1="0" y2="0"><stop offset="0.00" stop-color="#6effd7"/><stop offset="0.10" stop-color="#89ffd6"/><stop offset="0.20" stop-color="#9fffd5"/><stop offset="0.30" stop-color="#b3ffd4"/><stop offset="0.40" stop-color="#c5ffd3"/><stop offset="0.50" stop-color="#d6ffd2"/><stop offset="0.60" stop-color="#e6ffd0"/><stop offset="0.70" stop-color="#f5ffcf"/><stop offset="0.80" stop-color="#fffac9"/><stop offset="0.90" stop-color="#ffecbc"/><stop offset="1.00" stop-color="#ffe0b1"/></linearGradient>
<rect x="406.5" y="892" width="280.0" height="3.6" fill="url(#cier4)"/>
<linearGradient id="cier5" x1="0" x2="1" y1="0" y2="0"><stop offset="0.00" stop-color="#70ffd9"/><stop offset="0.10" stop-color="#8affd8"/><stop offset="0.20" stop-color="#a0ffd6"/><stop offset="0.30" stop-color="#b4ffd5"/><stop offset="0.40" stop-color="#c6ffd4"/><stop offset="0.50" stop-color="#d7ffd3"/><stop offset="0.60" stop-color="#e7ffd2"/><stop offset="0.70" stop-color="#f7ffd0"/><stop offset="0.80" stop-color="#fff8c9"/><stop offset="0.90" stop-color="#ffebbd"/><stop offset="1.00" stop-color="#ffdfb1"/></linearGradient>
<rect x="406.5" y="895" width="280.0" height="3.6" fill="url(#cier5)"/>
<linearGradient id="cier6" x1="0" x2="1" y1="0" y2="0"><stop offset="0.00" stop-color="#71ffda"/><stop offset="0.10" stop-color="#8bffd9"/><stop offset="0.20" stop-color="#a1ffd8"/><stop offset="0.30" stop-color="#b5ffd7"/><stop offset="0.40" stop-color="#c7ffd5"/><stop offset="0.50" stop-color="#d8ffd4"/><stop offset="0.60" stop-color="#e8ffd3"/><stop offset="0.70" stop-color="#f8ffd1"/><stop offset="0.80" stop-color="#fff7ca"/><stop offset="0.90" stop-color="#ffeabd"/><stop offset="1.00" stop-color="#ffdeb2"/></linearGradient>
<rect x="406.5" y="898" width="280.0" height="3.6" fill="url(#cier6)"/>
<linearGradient id="cier7" x1="0" x2="1" y1="0" y2="0"><stop offset="0.00" stop-color="#73ffdb"/><stop offset="0.10" stop-color="#8dffda"/><stop offset="0.20" stop-color="#a3ffd9"/><stop offset="0.30" stop-color="#b6ffd8"/><stop offset="0.40" stop-color="#c8ffd7"/><stop offset="0.50" stop-color="#d9ffd5"/><stop offset="0.60" stop-color="#e9ffd4"/><stop offset="0.70" stop-color="#f9ffd3"/><stop offset="0.80" stop-color="#fff6ca"/><stop offset="0.90" stop-color="#ffe9bd"/><stop offset="1.00" stop-color="#ffddb2"/></linearGradient>
<rect x="406.5" y="901" width="280.0" height="3.6" fill="url(#cier7)"/>
<linearGradient id="cier8" x1="0" x2="1" y1="0" y2="0"><stop offset="0.00" stop-color="#74ffdc"/><stop offset="0.10" stop-color="#8effdb"/><stop offset="0.20" stop-color="#a4ffda"/><stop offset="0.30" stop-color="#b7ffd9"/><stop offset="0.40" stop-color="#c9ffd8"/><stop offset="0.50" stop-color="#daffd7"/><stop offset="0.60" stop-color="#ebffd6"/><stop offset="0.70" stop-color="#faffd4"/><stop offset="0.80" stop-color="#fff5ca"/><stop offset="0.90" stop-color="#ffe8be"/><stop offset="1.00" stop-color="#ffdcb3"/></linearGradient>
<rect x="406.5" y="904" width="280.0" height="3.6" fill="url(#cier8)"/>
<linearGradient id="cier9" x1="0" x2="1" y1="0" y2="0"><stop offset="0.00" stop-color="#75ffdd"/><stop offset="0.10" stop-color="#8fffdc"/><stop offset="0.20" stop-color="#a5ffdb"/><stop offset="0.30" stop-color="#b9ffda"/><stop offset="0.40" stop-color="#cbffd9"/><stop offset="0.50" stop-color="#dcffd8"/><stop offset="0.60" stop-color="#ecffd7"/><stop offset="0.70" stop-color="#fcffd6"/><stop offset="0.80" stop-color="#fff4cb"/><stop offset="0.90" stop-color="#ffe6be"/><stop offset="1.00" stop-color="#ffdbb3"/></linearGradient>
<rect x="406.5" y="907" width="280.0" height="3.6" fill="url(#cier9)"/>
<linearGradient id="cier10" x1="0" x2="1" y1="0" y2="0"><stop offset="0.00" stop-color="#77ffde"/><stop offset="0.10" stop-color="#90ffdd"/><stop offset="0.20" stop-color="#a6ffdd"/><stop offset="0.30" stop-color="#baffdc"/><stop offset="0.40" stop-color="#ccffdb"/><stop offset="0.50" stop-color="#ddffd9"/><stop offset="0.60" stop-color="#edffd8"/><stop offset="0.70" stop-color="#fdffd7"/><stop offset="0.80" stop-color="#fff2cb"/><stop offset="0.90" stop-color="#ffe5bf"/><stop offset="1.00" stop-color="#ffdab3"/></linearGradient>
<rect x="406.5" y="910" width="280.0" height="3.6" fill="url(#cier10)"/>
<linearGradient id="cier11" x1="0" x2="1" y1="0" y2="0"><stop offset="0.00" stop-color="#78ffe0"/><stop offset="0.10" stop-color="#92ffdf"/><stop offset="0.20" stop-color="#a7ffde"/><stop offset="0.30" stop-color="#bbffdd"/><stop offset="0.40" stop-color="#cdffdc"/><stop offset="0.50" stop-color="#deffdb"/><stop offset="0.60" stop-color="#eeffda"/><stop offset="0.70" stop-color="#feffd8"/><stop offset="0.80" stop-color="#fff1cb"/><stop offset="0.90" stop-color="#ffe4bf"/><stop offset="1.00" stop-color="#ffd8b4"/></linearGradient>
<rect x="406.5" y="913" width="280.0" height="3.6" fill="url(#cier11)"/>
<linearGradient id="cier12" x1="0" x2="1" y1="0" y2="0"><stop offset="0.00" stop-color="#7affe1"/><stop offset="0.10" stop-color="#93ffe0"/><stop offset="0.20" stop-color="#a9ffdf"/><stop offset="0.30" stop-color="#bcffde"/><stop offset="0.40" stop-color="#ceffdd"/><stop offset="0.50" stop-color="#dfffdc"/><stop offset="0.60" stop-color="#f0ffdb"/><stop offset="0.70" stop-color="#fffed9"/><stop offset="0.80" stop-color="#fff0cc"/><stop offset="0.90" stop-color="#ffe3bf"/><stop offset="1.00" stop-color="#ffd7b4"/></linearGradient>
<rect x="406.5" y="916" width="280.0" height="3.6" fill="url(#cier12)"/>
<linearGradient id="cier13" x1="0" x2="1" y1="0" y2="0"><stop offset="0.00" stop-color="#7bffe2"/><stop offset="0.10" stop-color="#94ffe1"/><stop offset="0.20" stop-color="#aaffe0"/><stop offset="0.30" stop-color="#bdffdf"/><stop offset="0.40" stop-color="#cfffde"/><stop offset="0.50" stop-color="#e1ffde"/><stop offset="0.60" stop-color="#f1ffdc"/><stop offset="0.70" stop-color="#fffdda"/><stop offset="0.80" stop-color="#ffefcc"/><stop offset="0.90" stop-color="#ffe2c0"/><stop offset="1.00" stop-color="#ffd6b5"/></linearGradient>
<rect x="406.5" y="919" width="280.0" height="3.6" fill="url(#cier13)"/>
<linearGradient id="cier14" x1="0" x2="1" y1="0" y2="0"><stop offset="0.00" stop-color="#7cffe3"/><stop offset="0.10" stop-color="#95ffe2"/><stop offset="0.20" stop-color="#abffe2"/><stop offset="0.30" stop-color="#bfffe1"/><stop offset="0.40" stop-color="#d1ffe0"/><stop offset="0.50" stop-color="#e2ffdf"/><stop offset="0.60" stop-color="#f2ffde"/><stop offset="0.70" stop-color="#fffcda"/><stop offset="0.80" stop-color="#ffedcc"/><stop offset="0.90" stop-color="#ffe1c0"/><stop offset="1.00" stop-color="#ffd5b5"/></linearGradient>
<rect x="406.5" y="922" width="280.0" height="3.6" fill="url(#cier14)"/>
<linearGradient id="cier15" x1="0" x2="1" y1="0" y2="0"><stop offset="0.00" stop-color="#7effe4"/><stop offset="0.10" stop-color="#97ffe4"/><stop offset="0.20" stop-color="#acffe3"/><stop offset="0.30" stop-color="#c0ffe2"/><stop offset="0.40" stop-color="#d2ffe1"/><stop offset="0.50" stop-color="#e3ffe0"/><stop offset="0.60" stop-color="#f4ffdf"/><stop offset="0.70" stop-color="#fffbda"/><stop offset="0.80" stop-color="#ffeccd"/><stop offset="0.90" stop-color="#ffdfc1"/><stop offset="1.00" stop-color="#ffd4b6"/></linearGradient>
<rect x="406.5" y="925" width="280.0" height="3.6" fill="url(#cier15)"/>
<linearGradient id="cier16" x1="0" x2="1" y1="0" y2="0"><stop offset="0.00" stop-color="#7fffe5"/><stop offset="0.10" stop-color="#98ffe5"/><stop offset="0.20" stop-color="#aeffe4"/><stop offset="0.30" stop-color="#c1ffe3"/><stop offset="0.40" stop-color="#d3ffe3"/><stop offset="0.50" stop-color="#e4ffe2"/><stop offset="0.60" stop-color="#f5ffe1"/><stop offset="0.70" stop-color="#fff9db"/><stop offset="0.80" stop-color="#ffebcd"/><stop offset="0.90" stop-color="#ffdec1"/><stop offset="1.00" stop-color="#ffd3b6"/></linearGradient>
<rect x="406.5" y="928" width="280.0" height="3.6" fill="url(#cier16)"/>
<linearGradient id="cier17" x1="0" x2="1" y1="0" y2="0"><stop offset="0.00" stop-color="#80ffe7"/><stop offset="0.10" stop-color="#99ffe6"/><stop offset="0.20" stop-color="#afffe5"/><stop offset="0.30" stop-color="#c2ffe5"/><stop offset="0.40" stop-color="#d4ffe4"/><stop offset="0.50" stop-color="#e6ffe3"/><stop offset="0.60" stop-color="#f6ffe2"/><stop offset="0.70" stop-color="#fff8db"/><stop offset="0.80" stop-color="#ffeacd"/><stop offset="0.90" stop-color="#ffddc1"/><stop offset="1.00" stop-color="#ffd2b6"/></linearGradient>
<rect x="406.5" y="931" width="280.0" height="3.6" fill="url(#cier17)"/>
<linearGradient id="cier18" x1="0" x2="1" y1="0" y2="0"><stop offset="0.00" stop-color="#82ffe8"/><stop offset="0.10" stop-color="#9bffe7"/><stop offset="0.20" stop-color="#b0ffe7"/><stop offset="0.30" stop-color="#c3ffe6"/><stop offset="0.40" stop-color="#d6ffe5"/><stop offset="0.50" stop-color="#e7ffe4"/><stop offset="0.60" stop-color="#f7ffe4"/><stop offset="0.70" stop-color="#fff7db"/><stop offset="0.80" stop-color="#ffe9ce"/><stop offset="0.90" stop-color="#ffdcc2"/><stop offset="1.00" stop-color="#ffd1b7"/></linearGradient>
<rect x="406.5" y="934" width="280.0" height="3.6" fill="url(#cier18)"/>
<linearGradient id="cier19" x1="0" x2="1" y1="0" y2="0"><stop offset="0.00" stop-color="#83ffe9"/><stop offset="0.10" stop-color="#9cffe9"/><stop offset="0.20" stop-color="#b1ffe8"/><stop offset="0.30" stop-color="#c5ffe7"/><stop offset="0.40" stop-color="#d7ffe7"/><stop offset="0.50" stop-color="#e8ffe6"/><stop offset="0.60" stop-color="#f9ffe5"/><stop offset="0.70" stop-color="#fff5dc"/><stop offset="0.80" stop-color="#ffe7ce"/><stop offset="0.90" stop-color="#ffdbc2"/><stop offset="1.00" stop-color="#ffd0b7"/></linearGradient>
<rect x="406.5" y="937" width="280.0" height="3.6" fill="url(#cier19)"/>
<linearGradient id="cier20" x1="0" x2="1" y1="0" y2="0"><stop offset="0.00" stop-color="#85ffea"/><stop offset="0.10" stop-color="#9dffea"/><stop offset="0.20" stop-color="#b2ffe9"/><stop offset="0.30" stop-color="#c6ffe9"/><stop offset="0.40" stop-color="#d8ffe8"/><stop offset="0.50" stop-color="#eaffe7"/><stop offset="0.60" stop-color="#faffe7"/><stop offset="0.70" stop-color="#fff4dc"/><stop offset="0.80" stop-color="#ffe6ce"/><stop offset="0.90" stop-color="#ffdac2"/><stop offset="1.00" stop-color="#ffcfb8"/></linearGradient>
<rect x="406.5" y="940" width="280.0" height="3.6" fill="url(#cier20)"/>
<linearGradient id="cier21" x1="0" x2="1" y1="0" y2="0"><stop offset="0.00" stop-color="#86ffec"/><stop offset="0.10" stop-color="#9effeb"/><stop offset="0.20" stop-color="#b4ffeb"/><stop offset="0.30" stop-color="#c7ffea"/><stop offset="0.40" stop-color="#d9ffe9"/><stop offset="0.50" stop-color="#ebffe9"/><stop offset="0.60" stop-color="#fcffe8"/><stop offset="0.70" stop-color="#fff3dc"/><stop offset="0.80" stop-color="#ffe5cf"/><stop offset="0.90" stop-color="#ffd9c3"/><stop offset="1.00" stop-color="#ffcdb8"/></linearGradient>
<rect x="406.5" y="943" width="280.0" height="3.6" fill="url(#cier21)"/>
<linearGradient id="cier22" x1="0" x2="1" y1="0" y2="0"><stop offset="0.00" stop-color="#87ffed"/><stop offset="0.10" stop-color="#a0ffec"/><stop offset="0.20" stop-color="#b5ffec"/><stop offset="0.30" stop-color="#c9ffeb"/><stop offset="0.40" stop-color="#dbffeb"/><stop offset="0.50" stop-color="#ecffea"/><stop offset="0.60" stop-color="#fdffe9"/><stop offset="0.70" stop-color="#fff1dc"/><stop offset="0.80" stop-color="#ffe4cf"/><stop offset="0.90" stop-color="#ffd7c3"/><stop offset="1.00" stop-color="#ffccb8"/></linearGradient>
<rect x="406.5" y="946" width="280.0" height="3.6" fill="url(#cier22)"/>
<linearGradient id="cier23" x1="0" x2="1" y1="0" y2="0"><stop offset="0.00" stop-color="#89ffee"/><stop offset="0.10" stop-color="#a1ffee"/><stop offset="0.20" stop-color="#b6ffed"/><stop offset="0.30" stop-color="#caffed"/><stop offset="0.40" stop-color="#dcffec"/><stop offset="0.50" stop-color="#edffec"/><stop offset="0.60" stop-color="#feffeb"/><stop offset="0.70" stop-color="#fff0dd"/><stop offset="0.80" stop-color="#ffe2cf"/><stop offset="0.90" stop-color="#ffd6c4"/><stop offset="1.00" stop-color="#ffcbb9"/></linearGradient>
<rect x="406.5" y="949" width="280.0" height="3.6" fill="url(#cier23)"/>
<linearGradient id="cier24" x1="0" x2="1" y1="0" y2="0"><stop offset="0.00" stop-color="#8affef"/><stop offset="0.10" stop-color="#a2ffef"/><stop offset="0.20" stop-color="#b8ffef"/><stop offset="0.30" stop-color="#cbffee"/><stop offset="0.40" stop-color="#ddffee"/><stop offset="0.50" stop-color="#efffed"/><stop offset="0.60" stop-color="#fffeec"/><stop offset="0.70" stop-color="#ffefdd"/><stop offset="0.80" stop-color="#ffe1d0"/><stop offset="0.90" stop-color="#ffd5c4"/><stop offset="1.00" stop-color="#ffcab9"/></linearGradient>
<rect x="406.5" y="952" width="280.0" height="3.6" fill="url(#cier24)"/>
<linearGradient id="cier25" x1="0" x2="1" y1="0" y2="0"><stop offset="0.00" stop-color="#8bfff1"/><stop offset="0.10" stop-color="#a4fff0"/><stop offset="0.20" stop-color="#b9fff0"/><stop offset="0.30" stop-color="#ccffef"/><stop offset="0.40" stop-color="#dfffef"/><stop offset="0.50" stop-color="#f0ffef"/><stop offset="0.60" stop-color="#fffdec"/><stop offset="0.70" stop-color="#ffeedd"/><stop offset="0.80" stop-color="#ffe0d0"/><stop offset="0.90" stop-color="#ffd4c4"/><stop offset="1.00" stop-color="#ffc9ba"/></linearGradient>
<rect x="406.5" y="955" width="280.0" height="3.6" fill="url(#cier25)"/>
<linearGradient id="cier26" x1="0" x2="1" y1="0" y2="0"><stop offset="0.00" stop-color="#8dfff2"/><stop offset="0.10" stop-color="#a5fff2"/><stop offset="0.20" stop-color="#bafff1"/><stop offset="0.30" stop-color="#cefff1"/><stop offset="0.40" stop-color="#e0fff0"/><stop offset="0.50" stop-color="#f2fff0"/><stop offset="0.60" stop-color="#fffcec"/><stop offset="0.70" stop-color="#ffecdd"/><stop offset="0.80" stop-color="#ffdfd0"/><stop offset="0.90" stop-color="#ffd3c5"/><stop offset="1.00" stop-color="#ffc8ba"/></linearGradient>
<rect x="406.5" y="958" width="280.0" height="3.6" fill="url(#cier26)"/>
<linearGradient id="cier27" x1="0" x2="1" y1="0" y2="0"><stop offset="0.00" stop-color="#8efff3"/><stop offset="0.10" stop-color="#a6fff3"/><stop offset="0.20" stop-color="#bbfff3"/><stop offset="0.30" stop-color="#cffff2"/><stop offset="0.40" stop-color="#e1fff2"/><stop offset="0.50" stop-color="#f3fff2"/><stop offset="0.60" stop-color="#fffaec"/><stop offset="0.70" stop-color="#ffebde"/><stop offset="0.80" stop-color="#ffded1"/><stop offset="0.90" stop-color="#ffd2c5"/><stop offset="1.00" stop-color="#ffc7ba"/></linearGradient>
<rect x="406.5" y="961" width="280.0" height="3.6" fill="url(#cier27)"/>
<linearGradient id="cier28" x1="0" x2="1" y1="0" y2="0"><stop offset="0.00" stop-color="#90fff5"/><stop offset="0.10" stop-color="#a7fff4"/><stop offset="0.20" stop-color="#bdfff4"/><stop offset="0.30" stop-color="#d0fff4"/><stop offset="0.40" stop-color="#e3fff3"/><stop offset="0.50" stop-color="#f4fff3"/><stop offset="0.60" stop-color="#fff9ed"/><stop offset="0.70" stop-color="#ffeade"/><stop offset="0.80" stop-color="#ffdcd1"/><stop offset="0.90" stop-color="#ffd1c5"/><stop offset="1.00" stop-color="#ffc6bb"/></linearGradient>
<rect x="406.5" y="964" width="280.0" height="3.6" fill="url(#cier28)"/>
<linearGradient id="cier29" x1="0" x2="1" y1="0" y2="0"><stop offset="0.00" stop-color="#91fff6"/><stop offset="0.10" stop-color="#a9fff6"/><stop offset="0.20" stop-color="#befff5"/><stop offset="0.30" stop-color="#d2fff5"/><stop offset="0.40" stop-color="#e4fff5"/><stop offset="0.50" stop-color="#f6fff5"/><stop offset="0.60" stop-color="#fff7ed"/><stop offset="0.70" stop-color="#ffe8de"/><stop offset="0.80" stop-color="#ffdbd1"/><stop offset="0.90" stop-color="#ffcfc6"/><stop offset="1.00" stop-color="#ffc5bb"/></linearGradient>
<rect x="406.5" y="967" width="280.0" height="3.6" fill="url(#cier29)"/>
<linearGradient id="cier30" x1="0" x2="1" y1="0" y2="0"><stop offset="0.00" stop-color="#92fff7"/><stop offset="0.10" stop-color="#aafff7"/><stop offset="0.20" stop-color="#bffff7"/><stop offset="0.30" stop-color="#d3fff7"/><stop offset="0.40" stop-color="#e5fff6"/><stop offset="0.50" stop-color="#f7fff6"/><stop offset="0.60" stop-color="#fff6ed"/><stop offset="0.70" stop-color="#ffe7de"/><stop offset="0.80" stop-color="#ffdad2"/><stop offset="0.90" stop-color="#ffcec6"/><stop offset="1.00" stop-color="#ffc4bb"/></linearGradient>
<rect x="406.5" y="970" width="280.0" height="3.6" fill="url(#cier30)"/>
<linearGradient id="cier31" x1="0" x2="1" y1="0" y2="0"><stop offset="0.00" stop-color="#94fff9"/><stop offset="0.10" stop-color="#abfff8"/><stop offset="0.20" stop-color="#c1fff8"/><stop offset="0.30" stop-color="#d4fff8"/><stop offset="0.40" stop-color="#e7fff8"/><stop offset="0.50" stop-color="#f9fff8"/><stop offset="0.60" stop-color="#fff5ed"/><stop offset="0.70" stop-color="#ffe6df"/><stop offset="0.80" stop-color="#ffd9d2"/><stop offset="0.90" stop-color="#ffcdc6"/><stop offset="1.00" stop-color="#ffc2bc"/></linearGradient>
<rect x="406.5" y="973" width="280.0" height="3.6" fill="url(#cier31)"/>
<linearGradient id="cier32" x1="0" x2="1" y1="0" y2="0"><stop offset="0.00" stop-color="#95fffa"/><stop offset="0.10" stop-color="#adfffa"/><stop offset="0.20" stop-color="#c2fffa"/><stop offset="0.30" stop-color="#d6fff9"/><stop offset="0.40" stop-color="#e8fff9"/><stop offset="0.50" stop-color="#fafff9"/><stop offset="0.60" stop-color="#fff3ed"/><stop offset="0.70" stop-color="#ffe5df"/><stop offset="0.80" stop-color="#ffd8d2"/><stop offset="0.90" stop-color="#ffccc7"/><stop offset="1.00" stop-color="#ffc1bc"/></linearGradient>
<rect x="406.5" y="976" width="280.0" height="3.6" fill="url(#cier32)"/>
<linearGradient id="cier33" x1="0" x2="1" y1="0" y2="0"><stop offset="0.00" stop-color="#96fffb"/><stop offset="0.10" stop-color="#aefffb"/><stop offset="0.20" stop-color="#c3fffb"/><stop offset="0.30" stop-color="#d7fffb"/><stop offset="0.40" stop-color="#eafffb"/><stop offset="0.50" stop-color="#fbfffb"/><stop offset="0.60" stop-color="#fff2ee"/><stop offset="0.70" stop-color="#ffe3df"/><stop offset="0.80" stop-color="#ffd6d2"/><stop offset="0.90" stop-color="#ffcbc7"/><stop offset="1.00" stop-color="#ffc0bc"/></linearGradient>
<rect x="406.5" y="979" width="280.0" height="3.6" fill="url(#cier33)"/>
<linearGradient id="cier34" x1="0" x2="1" y1="0" y2="0"><stop offset="0.00" stop-color="#98fffd"/><stop offset="0.10" stop-color="#affffd"/><stop offset="0.20" stop-color="#c5fffc"/><stop offset="0.30" stop-color="#d8fffc"/><stop offset="0.40" stop-color="#ebfffc"/><stop offset="0.50" stop-color="#fdfffc"/><stop offset="0.60" stop-color="#fff0ee"/><stop offset="0.70" stop-color="#ffe2df"/><stop offset="0.80" stop-color="#ffd5d3"/><stop offset="0.90" stop-color="#ffcac7"/><stop offset="1.00" stop-color="#ffbfbd"/></linearGradient>
<rect x="406.5" y="982" width="280.0" height="3.6" fill="url(#cier34)"/>
<linearGradient id="cier35" x1="0" x2="1" y1="0" y2="0"><stop offset="0.00" stop-color="#99fffe"/><stop offset="0.10" stop-color="#b1fffe"/><stop offset="0.20" stop-color="#c6fffe"/><stop offset="0.30" stop-color="#dafffe"/><stop offset="0.40" stop-color="#ecfffe"/><stop offset="0.50" stop-color="#fefffe"/><stop offset="0.60" stop-color="#ffefee"/><stop offset="0.70" stop-color="#ffe1e0"/><stop offset="0.80" stop-color="#ffd4d3"/><stop offset="0.90" stop-color="#ffc8c8"/><stop offset="1.00" stop-color="#ffbebd"/></linearGradient>
<rect x="406.5" y="985" width="280.0" height="3.6" fill="url(#cier35)"/>
<linearGradient id="cier36" x1="0" x2="1" y1="0" y2="0"><stop offset="0.00" stop-color="#9affff"/><stop offset="0.10" stop-color="#b2ffff"/><stop offset="0.20" stop-color="#c7ffff"/><stop offset="0.30" stop-color="#dbffff"/><stop offset="0.40" stop-color="#edffff"/><stop offset="0.50" stop-color="#fffeff"/><stop offset="0.60" stop-color="#ffeeee"/><stop offset="0.70" stop-color="#ffdfe0"/><stop offset="0.80" stop-color="#ffd3d3"/><stop offset="0.90" stop-color="#ffc7c8"/><stop offset="1.00" stop-color="#ffbdbe"/></linearGradient>
<rect x="406.5" y="988" width="280.0" height="3.6" fill="url(#cier36)"/>
<linearGradient id="cier37" x1="0" x2="1" y1="0" y2="0"><stop offset="0.00" stop-color="#9bfdff"/><stop offset="0.10" stop-color="#b2fdff"/><stop offset="0.20" stop-color="#c7fdff"/><stop offset="0.30" stop-color="#dbfdff"/><stop offset="0.40" stop-color="#edfdff"/><stop offset="0.50" stop-color="#fffdff"/><stop offset="0.60" stop-color="#ffecee"/><stop offset="0.70" stop-color="#ffdee0"/><stop offset="0.80" stop-color="#ffd1d4"/><stop offset="0.90" stop-color="#ffc6c8"/><stop offset="1.00" stop-color="#ffbcbe"/></linearGradient>
<rect x="406.5" y="991" width="280.0" height="3.6" fill="url(#cier37)"/>
<linearGradient id="cier38" x1="0" x2="1" y1="0" y2="0"><stop offset="0.00" stop-color="#9cfcff"/><stop offset="0.10" stop-color="#b3fcff"/><stop offset="0.20" stop-color="#c8fcff"/><stop offset="0.30" stop-color="#dbfcff"/><stop offset="0.40" stop-color="#edfbff"/><stop offset="0.50" stop-color="#fffbff"/><stop offset="0.60" stop-color="#ffebef"/><stop offset="0.70" stop-color="#ffdde0"/><stop offset="0.80" stop-color="#ffd0d4"/><stop offset="0.90" stop-color="#ffc5c8"/><stop offset="1.00" stop-color="#ffbbbe"/></linearGradient>
<rect x="406.5" y="994" width="280.0" height="3.6" fill="url(#cier38)"/>
<linearGradient id="cier39" x1="0" x2="1" y1="0" y2="0"><stop offset="0.00" stop-color="#9cfbff"/><stop offset="0.10" stop-color="#b3faff"/><stop offset="0.20" stop-color="#c8faff"/><stop offset="0.30" stop-color="#dbfaff"/><stop offset="0.40" stop-color="#edfaff"/><stop offset="0.50" stop-color="#fffaff"/><stop offset="0.60" stop-color="#ffeaef"/><stop offset="0.70" stop-color="#ffdce1"/><stop offset="0.80" stop-color="#ffcfd4"/><stop offset="0.90" stop-color="#ffc4c9"/><stop offset="1.00" stop-color="#ffbabf"/></linearGradient>
<rect x="406.5" y="997" width="280.0" height="3.6" fill="url(#cier39)"/>
<linearGradient id="cier40" x1="0" x2="1" y1="0" y2="0"><stop offset="0.00" stop-color="#9df9ff"/><stop offset="0.10" stop-color="#b3f9ff"/><stop offset="0.20" stop-color="#c8f9ff"/><stop offset="0.30" stop-color="#dbf9ff"/><stop offset="0.40" stop-color="#edf8ff"/><stop offset="0.50" stop-color="#fff8ff"/><stop offset="0.60" stop-color="#ffe8ef"/><stop offset="0.70" stop-color="#ffdae1"/><stop offset="0.80" stop-color="#ffced4"/><stop offset="0.90" stop-color="#ffc3c9"/><stop offset="1.00" stop-color="#ffb8bf"/></linearGradient>
<rect x="406.5" y="1000" width="280.0" height="3.6" fill="url(#cier40)"/>
<linearGradient id="cier41" x1="0" x2="1" y1="0" y2="0"><stop offset="0.00" stop-color="#9df8ff"/><stop offset="0.10" stop-color="#b4f8ff"/><stop offset="0.20" stop-color="#c8f7ff"/><stop offset="0.30" stop-color="#dbf7ff"/><stop offset="0.40" stop-color="#edf7ff"/><stop offset="0.50" stop-color="#fff6ff"/><stop offset="0.60" stop-color="#ffe7ef"/><stop offset="0.70" stop-color="#ffd9e1"/><stop offset="0.80" stop-color="#ffcdd5"/><stop offset="0.90" stop-color="#ffc1c9"/><stop offset="1.00" stop-color="#ffb7bf"/></linearGradient>
<rect x="406.5" y="1003" width="280.0" height="3.6" fill="url(#cier41)"/>
<linearGradient id="cier42" x1="0" x2="1" y1="0" y2="0"><stop offset="0.00" stop-color="#9ef6ff"/><stop offset="0.10" stop-color="#b4f6ff"/><stop offset="0.20" stop-color="#c8f6ff"/><stop offset="0.30" stop-color="#dbf6ff"/><stop offset="0.40" stop-color="#edf5ff"/><stop offset="0.50" stop-color="#fff5ff"/><stop offset="0.60" stop-color="#ffe5ef"/><stop offset="0.70" stop-color="#ffd8e1"/><stop offset="0.80" stop-color="#ffcbd5"/><stop offset="0.90" stop-color="#ffc0ca"/><stop offset="1.00" stop-color="#ffb6c0"/></linearGradient>
<rect x="406.5" y="1006" width="280.0" height="3.6" fill="url(#cier42)"/>
<linearGradient id="cier43" x1="0" x2="1" y1="0" y2="0"><stop offset="0.00" stop-color="#9ef5ff"/><stop offset="0.10" stop-color="#b4f5ff"/><stop offset="0.20" stop-color="#c9f4ff"/><stop offset="0.30" stop-color="#dbf4ff"/><stop offset="0.40" stop-color="#edf4ff"/><stop offset="0.50" stop-color="#fff3ff"/><stop offset="0.60" stop-color="#ffe4ef"/><stop offset="0.70" stop-color="#ffd6e2"/><stop offset="0.80" stop-color="#ffcad5"/><stop offset="0.90" stop-color="#ffbfca"/><stop offset="1.00" stop-color="#ffb5c0"/></linearGradient>
<rect x="406.5" y="1009" width="280.0" height="3.6" fill="url(#cier43)"/>
<linearGradient id="cier44" x1="0" x2="1" y1="0" y2="0"><stop offset="0.00" stop-color="#9ff4ff"/><stop offset="0.10" stop-color="#b5f3ff"/><stop offset="0.20" stop-color="#c9f3ff"/><stop offset="0.30" stop-color="#dbf3ff"/><stop offset="0.40" stop-color="#edf2ff"/><stop offset="0.50" stop-color="#fef2ff"/><stop offset="0.60" stop-color="#ffe3f0"/><stop offset="0.70" stop-color="#ffd5e2"/><stop offset="0.80" stop-color="#ffc9d5"/><stop offset="0.90" stop-color="#ffbeca"/><stop offset="1.00" stop-color="#ffb4c0"/></linearGradient>
<rect x="406.5" y="1012" width="280.0" height="3.6" fill="url(#cier44)"/>
<linearGradient id="cier45" x1="0" x2="1" y1="0" y2="0"><stop offset="0.00" stop-color="#9ff2ff"/><stop offset="0.10" stop-color="#b5f2ff"/><stop offset="0.20" stop-color="#c9f2ff"/><stop offset="0.30" stop-color="#dcf1ff"/><stop offset="0.40" stop-color="#edf1ff"/><stop offset="0.50" stop-color="#fef0ff"/><stop offset="0.60" stop-color="#ffe1f0"/><stop offset="0.70" stop-color="#ffd4e2"/><stop offset="0.80" stop-color="#ffc8d6"/><stop offset="0.90" stop-color="#ffbdcb"/><stop offset="1.00" stop-color="#ffb3c0"/></linearGradient>
<rect x="406.5" y="1015" width="280.0" height="3.6" fill="url(#cier45)"/>
<linearGradient id="cier46" x1="0" x2="1" y1="0" y2="0"><stop offset="0.00" stop-color="#9ff1ff"/><stop offset="0.10" stop-color="#b5f1ff"/><stop offset="0.20" stop-color="#c9f0ff"/><stop offset="0.30" stop-color="#dcf0ff"/><stop offset="0.40" stop-color="#edefff"/><stop offset="0.50" stop-color="#feefff"/><stop offset="0.60" stop-color="#ffe0f0"/><stop offset="0.70" stop-color="#ffd2e2"/><stop offset="0.80" stop-color="#ffc6d6"/><stop offset="0.90" stop-color="#ffbccb"/><stop offset="1.00" stop-color="#ffb2c1"/></linearGradient>
<rect x="406.5" y="1018" width="280.0" height="3.6" fill="url(#cier46)"/>
<linearGradient id="cier47" x1="0" x2="1" y1="0" y2="0"><stop offset="0.00" stop-color="#a0f0ff"/><stop offset="0.10" stop-color="#b6efff"/><stop offset="0.20" stop-color="#c9efff"/><stop offset="0.30" stop-color="#dceeff"/><stop offset="0.40" stop-color="#edeeff"/><stop offset="0.50" stop-color="#feedff"/><stop offset="0.60" stop-color="#ffdff0"/><stop offset="0.70" stop-color="#ffd1e2"/><stop offset="0.80" stop-color="#ffc5d6"/><stop offset="0.90" stop-color="#ffbacb"/><stop offset="1.00" stop-color="#ffb0c1"/></linearGradient>
<rect x="406.5" y="1021" width="280.0" height="3.6" fill="url(#cier47)"/>
<linearGradient id="cier48" x1="0" x2="1" y1="0" y2="0"><stop offset="0.00" stop-color="#a0eeff"/><stop offset="0.10" stop-color="#b6eeff"/><stop offset="0.20" stop-color="#c9edff"/><stop offset="0.30" stop-color="#dcedff"/><stop offset="0.40" stop-color="#edecff"/><stop offset="0.50" stop-color="#feebff"/><stop offset="0.60" stop-color="#ffddf0"/><stop offset="0.70" stop-color="#ffd0e3"/><stop offset="0.80" stop-color="#ffc4d6"/><stop offset="0.90" stop-color="#ffb9cb"/><stop offset="1.00" stop-color="#ffafc1"/></linearGradient>
<rect x="406.5" y="1024" width="280.0" height="3.6" fill="url(#cier48)"/>
<linearGradient id="cier49" x1="0" x2="1" y1="0" y2="0"><stop offset="0.00" stop-color="#a1edff"/><stop offset="0.10" stop-color="#b6edff"/><stop offset="0.20" stop-color="#caecff"/><stop offset="0.30" stop-color="#dcebff"/><stop offset="0.40" stop-color="#edebff"/><stop offset="0.50" stop-color="#feeaff"/><stop offset="0.60" stop-color="#ffdcf1"/><stop offset="0.70" stop-color="#ffcfe3"/><stop offset="0.80" stop-color="#ffc3d7"/><stop offset="0.90" stop-color="#ffb8cc"/><stop offset="1.00" stop-color="#ffaec2"/></linearGradient>
<rect x="406.5" y="1027" width="280.0" height="3.6" fill="url(#cier49)"/>
<linearGradient id="cier50" x1="0" x2="1" y1="0" y2="0"><stop offset="0.00" stop-color="#a1ecff"/><stop offset="0.10" stop-color="#b6ebff"/><stop offset="0.20" stop-color="#caebff"/><stop offset="0.30" stop-color="#dceaff"/><stop offset="0.40" stop-color="#ede9ff"/><stop offset="0.50" stop-color="#fee8ff"/><stop offset="0.60" stop-color="#ffdbf1"/><stop offset="0.70" stop-color="#ffcde3"/><stop offset="0.80" stop-color="#ffc2d7"/><stop offset="0.90" stop-color="#ffb7cc"/><stop offset="1.00" stop-color="#ffadc2"/></linearGradient>
<rect x="406.5" y="1030" width="280.0" height="3.6" fill="url(#cier50)"/>
<linearGradient id="cier51" x1="0" x2="1" y1="0" y2="0"><stop offset="0.00" stop-color="#a2eaff"/><stop offset="0.10" stop-color="#b7eaff"/><stop offset="0.20" stop-color="#cae9ff"/><stop offset="0.30" stop-color="#dce8ff"/><stop offset="0.40" stop-color="#ede8ff"/><stop offset="0.50" stop-color="#fee7ff"/><stop offset="0.60" stop-color="#ffd9f1"/><stop offset="0.70" stop-color="#ffcce3"/><stop offset="0.80" stop-color="#ffc0d7"/><stop offset="0.90" stop-color="#ffb6cc"/><stop offset="1.00" stop-color="#ffacc2"/></linearGradient>
<rect x="406.5" y="1033" width="280.0" height="3.6" fill="url(#cier51)"/>
<linearGradient id="cier52" x1="0" x2="1" y1="0" y2="0"><stop offset="0.00" stop-color="#a2e9ff"/><stop offset="0.10" stop-color="#b7e8ff"/><stop offset="0.20" stop-color="#cae8ff"/><stop offset="0.30" stop-color="#dce7ff"/><stop offset="0.40" stop-color="#ede6ff"/><stop offset="0.50" stop-color="#fee5ff"/><stop offset="0.60" stop-color="#ffd8f1"/><stop offset="0.70" stop-color="#ffcbe4"/><stop offset="0.80" stop-color="#ffbfd7"/><stop offset="0.90" stop-color="#ffb4cd"/><stop offset="1.00" stop-color="#ffabc3"/></linearGradient>
<rect x="406.5" y="1036" width="280.0" height="3.6" fill="url(#cier52)"/>
<linearGradient id="cier53" x1="0" x2="1" y1="0" y2="0"><stop offset="0.00" stop-color="#a3e8ff"/><stop offset="0.10" stop-color="#b7e7ff"/><stop offset="0.20" stop-color="#cae6ff"/><stop offset="0.30" stop-color="#dce5ff"/><stop offset="0.40" stop-color="#ede5ff"/><stop offset="0.50" stop-color="#fee4ff"/><stop offset="0.60" stop-color="#ffd6f1"/><stop offset="0.70" stop-color="#ffc9e4"/><stop offset="0.80" stop-color="#ffbed8"/><stop offset="0.90" stop-color="#ffb3cd"/><stop offset="1.00" stop-color="#ffa9c3"/></linearGradient>
<rect x="406.5" y="1039" width="280.0" height="3.6" fill="url(#cier53)"/>
<linearGradient id="cier54" x1="0" x2="1" y1="0" y2="0"><stop offset="0.00" stop-color="#a3e6ff"/><stop offset="0.10" stop-color="#b8e6ff"/><stop offset="0.20" stop-color="#cae5ff"/><stop offset="0.30" stop-color="#dce4ff"/><stop offset="0.40" stop-color="#ede3ff"/><stop offset="0.50" stop-color="#fde2ff"/><stop offset="0.60" stop-color="#ffd5f1"/><stop offset="0.70" stop-color="#ffc8e4"/><stop offset="0.80" stop-color="#ffbdd8"/><stop offset="0.90" stop-color="#ffb2cd"/><stop offset="1.00" stop-color="#ffa8c3"/></linearGradient>
<rect x="406.5" y="1042" width="280.0" height="3.6" fill="url(#cier54)"/>
<linearGradient id="cier55" x1="0" x2="1" y1="0" y2="0"><stop offset="0.00" stop-color="#a3e5ff"/><stop offset="0.10" stop-color="#b8e4ff"/><stop offset="0.20" stop-color="#cbe3ff"/><stop offset="0.30" stop-color="#dce3ff"/><stop offset="0.40" stop-color="#ede2ff"/><stop offset="0.50" stop-color="#fde1ff"/><stop offset="0.60" stop-color="#ffd4f1"/><stop offset="0.70" stop-color="#ffc7e4"/><stop offset="0.80" stop-color="#ffbbd8"/><stop offset="0.90" stop-color="#ffb1cd"/><stop offset="1.00" stop-color="#ffa7c4"/></linearGradient>
<rect x="406.5" y="1045" width="280.0" height="3.6" fill="url(#cier55)"/>
<linearGradient id="cier56" x1="0" x2="1" y1="0" y2="0"><stop offset="0.00" stop-color="#a4e4ff"/><stop offset="0.10" stop-color="#b8e3ff"/><stop offset="0.20" stop-color="#cbe2ff"/><stop offset="0.30" stop-color="#dce1ff"/><stop offset="0.40" stop-color="#ede0ff"/><stop offset="0.50" stop-color="#fddfff"/><stop offset="0.60" stop-color="#ffd2f2"/><stop offset="0.70" stop-color="#ffc6e4"/><stop offset="0.80" stop-color="#ffbad8"/><stop offset="0.90" stop-color="#ffb0ce"/><stop offset="1.00" stop-color="#ffa6c4"/></linearGradient>
<rect x="406.5" y="1048" width="280.0" height="3.6" fill="url(#cier56)"/>
<linearGradient id="cier57" x1="0" x2="1" y1="0" y2="0"><stop offset="0.00" stop-color="#a4e2ff"/><stop offset="0.10" stop-color="#b8e2ff"/><stop offset="0.20" stop-color="#cbe1ff"/><stop offset="0.30" stop-color="#dce0ff"/><stop offset="0.40" stop-color="#eddfff"/><stop offset="0.50" stop-color="#fddeff"/><stop offset="0.60" stop-color="#ffd1f2"/><stop offset="0.70" stop-color="#ffc4e5"/><stop offset="0.80" stop-color="#ffb9d9"/><stop offset="0.90" stop-color="#ffaece"/><stop offset="1.00" stop-color="#ffa5c4"/></linearGradient>
<rect x="406.5" y="1051" width="280.0" height="3.6" fill="url(#cier57)"/>
<linearGradient id="cier58" x1="0" x2="1" y1="0" y2="0"><stop offset="0.00" stop-color="#a5e1ff"/><stop offset="0.10" stop-color="#b9e0ff"/><stop offset="0.20" stop-color="#cbdfff"/><stop offset="0.30" stop-color="#dcdeff"/><stop offset="0.40" stop-color="#edddff"/><stop offset="0.50" stop-color="#fddcff"/><stop offset="0.60" stop-color="#ffd0f2"/><stop offset="0.70" stop-color="#ffc3e5"/><stop offset="0.80" stop-color="#ffb8d9"/><stop offset="0.90" stop-color="#ffadce"/><stop offset="1.00" stop-color="#ffa4c4"/></linearGradient>
<rect x="406.5" y="1054" width="280.0" height="3.6" fill="url(#cier58)"/>
<linearGradient id="cier59" x1="0" x2="1" y1="0" y2="0"><stop offset="0.00" stop-color="#a5e0ff"/><stop offset="0.10" stop-color="#b9dfff"/><stop offset="0.20" stop-color="#cbdeff"/><stop offset="0.30" stop-color="#ddddff"/><stop offset="0.40" stop-color="#eddcff"/><stop offset="0.50" stop-color="#fddbff"/><stop offset="0.60" stop-color="#ffcef2"/><stop offset="0.70" stop-color="#ffc2e5"/><stop offset="0.80" stop-color="#ffb6d9"/><stop offset="0.90" stop-color="#ffacce"/><stop offset="1.00" stop-color="#ffa2c5"/></linearGradient>
<rect x="406.5" y="1057" width="280.0" height="3.6" fill="url(#cier59)"/>
<linearGradient id="cier60" x1="0" x2="1" y1="0" y2="0"><stop offset="0.00" stop-color="#a5dfff"/><stop offset="0.10" stop-color="#b9deff"/><stop offset="0.20" stop-color="#cbddff"/><stop offset="0.30" stop-color="#dddbff"/><stop offset="0.40" stop-color="#eddaff"/><stop offset="0.50" stop-color="#fdd9ff"/><stop offset="0.60" stop-color="#ffcdf2"/><stop offset="0.70" stop-color="#ffc0e5"/><stop offset="0.80" stop-color="#ffb5d9"/><stop offset="0.90" stop-color="#ffabcf"/><stop offset="1.00" stop-color="#ffa1c5"/></linearGradient>
<rect x="406.5" y="1060" width="280.0" height="3.6" fill="url(#cier60)"/>
<linearGradient id="cier61" x1="0" x2="1" y1="0" y2="0"><stop offset="0.00" stop-color="#a6ddff"/><stop offset="0.10" stop-color="#badcff"/><stop offset="0.20" stop-color="#ccdbff"/><stop offset="0.30" stop-color="#dddaff"/><stop offset="0.40" stop-color="#edd9ff"/><stop offset="0.50" stop-color="#fdd7ff"/><stop offset="0.60" stop-color="#ffcbf2"/><stop offset="0.70" stop-color="#ffbfe5"/><stop offset="0.80" stop-color="#ffb4da"/><stop offset="0.90" stop-color="#ffa9cf"/><stop offset="1.00" stop-color="#ffa0c5"/></linearGradient>
<rect x="406.5" y="1063" width="280.0" height="3.6" fill="url(#cier61)"/>
<linearGradient id="cier62" x1="0" x2="1" y1="0" y2="0"><stop offset="0.00" stop-color="#a6dcff"/><stop offset="0.10" stop-color="#badbff"/><stop offset="0.20" stop-color="#ccdaff"/><stop offset="0.30" stop-color="#ddd9ff"/><stop offset="0.40" stop-color="#edd7ff"/><stop offset="0.50" stop-color="#fdd6ff"/><stop offset="0.60" stop-color="#ffcaf3"/><stop offset="0.70" stop-color="#ffbee6"/><stop offset="0.80" stop-color="#ffb2da"/><stop offset="0.90" stop-color="#ffa8cf"/><stop offset="1.00" stop-color="#ff9fc6"/></linearGradient>
<rect x="406.5" y="1066" width="280.0" height="3.6" fill="url(#cier62)"/>
<linearGradient id="cier63" x1="0" x2="1" y1="0" y2="0"><stop offset="0.00" stop-color="#a7dbff"/><stop offset="0.10" stop-color="#bad9ff"/><stop offset="0.20" stop-color="#ccd8ff"/><stop offset="0.30" stop-color="#ddd7ff"/><stop offset="0.40" stop-color="#edd6ff"/><stop offset="0.50" stop-color="#fdd4ff"/><stop offset="0.60" stop-color="#ffc9f3"/><stop offset="0.70" stop-color="#ffbce6"/><stop offset="0.80" stop-color="#ffb1da"/><stop offset="0.90" stop-color="#ffa7d0"/><stop offset="1.00" stop-color="#ff9ec6"/></linearGradient>
<rect x="406.5" y="1069" width="280.0" height="3.6" fill="url(#cier63)"/>
<linearGradient id="cier64" x1="0" x2="1" y1="0" y2="0"><stop offset="0.00" stop-color="#a7d9ff"/><stop offset="0.10" stop-color="#bad8ff"/><stop offset="0.20" stop-color="#ccd7ff"/><stop offset="0.30" stop-color="#ddd6ff"/><stop offset="0.40" stop-color="#edd4ff"/><stop offset="0.50" stop-color="#fdd3ff"/><stop offset="0.60" stop-color="#ffc7f3"/><stop offset="0.70" stop-color="#ffbbe6"/><stop offset="0.80" stop-color="#ffb0da"/><stop offset="0.90" stop-color="#ffa6d0"/><stop offset="1.00" stop-color="#ff9cc6"/></linearGradient>
<rect x="406.5" y="1072" width="280.0" height="3.6" fill="url(#cier64)"/>
<linearGradient id="cier65" x1="0" x2="1" y1="0" y2="0"><stop offset="0.00" stop-color="#a7d8ff"/><stop offset="0.10" stop-color="#bbd7ff"/><stop offset="0.20" stop-color="#ccd6ff"/><stop offset="0.30" stop-color="#ddd4ff"/><stop offset="0.40" stop-color="#edd3ff"/><stop offset="0.50" stop-color="#fcd1ff"/><stop offset="0.60" stop-color="#ffc6f3"/><stop offset="0.70" stop-color="#ffbae6"/><stop offset="0.80" stop-color="#ffafdb"/><stop offset="0.90" stop-color="#ffa5d0"/><stop offset="1.00" stop-color="#ff9bc6"/></linearGradient>
<rect x="406.5" y="1075" width="280.0" height="3.6" fill="url(#cier65)"/>
<linearGradient id="cier66" x1="0" x2="1" y1="0" y2="0"><stop offset="0.00" stop-color="#a8d7ff"/><stop offset="0.10" stop-color="#bbd5ff"/><stop offset="0.20" stop-color="#ccd4ff"/><stop offset="0.30" stop-color="#ddd3ff"/><stop offset="0.40" stop-color="#edd1ff"/><stop offset="0.50" stop-color="#fcd0ff"/><stop offset="0.60" stop-color="#ffc5f3"/><stop offset="0.70" stop-color="#ffb8e6"/><stop offset="0.80" stop-color="#ffaddb"/><stop offset="0.90" stop-color="#ffa3d0"/><stop offset="1.00" stop-color="#ff9ac7"/></linearGradient>
<rect x="406.5" y="1078" width="280.0" height="3.6" fill="url(#cier66)"/>
<linearGradient id="cier67" x1="0" x2="1" y1="0" y2="0"><stop offset="0.00" stop-color="#a8d5ff"/><stop offset="0.10" stop-color="#bbd4ff"/><stop offset="0.20" stop-color="#cdd3ff"/><stop offset="0.30" stop-color="#ddd1ff"/><stop offset="0.40" stop-color="#edd0ff"/><stop offset="0.50" stop-color="#fcceff"/><stop offset="0.60" stop-color="#ffc3f3"/><stop offset="0.70" stop-color="#ffb7e6"/><stop offset="0.80" stop-color="#ffacdb"/><stop offset="0.90" stop-color="#ffa2d1"/><stop offset="1.00" stop-color="#ff99c7"/></linearGradient>
<rect x="406.5" y="1081" width="280.0" height="3.6" fill="url(#cier67)"/>
<linearGradient id="cier68" x1="0" x2="1" y1="0" y2="0"><stop offset="0.00" stop-color="#a8d4ff"/><stop offset="0.10" stop-color="#bbd3ff"/><stop offset="0.20" stop-color="#cdd1ff"/><stop offset="0.30" stop-color="#ddd0ff"/><stop offset="0.40" stop-color="#edceff"/><stop offset="0.50" stop-color="#fccdff"/><stop offset="0.60" stop-color="#ffc2f3"/><stop offset="0.70" stop-color="#ffb6e7"/><stop offset="0.80" stop-color="#ffabdb"/><stop offset="0.90" stop-color="#ffa1d1"/><stop offset="1.00" stop-color="#ff97c7"/></linearGradient>
<rect x="406.5" y="1084" width="280.0" height="3.6" fill="url(#cier68)"/>
<linearGradient id="cier69" x1="0" x2="1" y1="0" y2="0"><stop offset="0.00" stop-color="#a9d3ff"/><stop offset="0.10" stop-color="#bcd1ff"/><stop offset="0.20" stop-color="#cdd0ff"/><stop offset="0.30" stop-color="#ddcfff"/><stop offset="0.40" stop-color="#edcdff"/><stop offset="0.50" stop-color="#fccbff"/><stop offset="0.60" stop-color="#ffc0f4"/><stop offset="0.70" stop-color="#ffb4e7"/><stop offset="0.80" stop-color="#ffa9db"/><stop offset="0.90" stop-color="#ff9fd1"/><stop offset="1.00" stop-color="#ff96c8"/></linearGradient>
<rect x="406.5" y="1087" width="280.0" height="3.6" fill="url(#cier69)"/>
<linearGradient id="cier70" x1="0" x2="1" y1="0" y2="0"><stop offset="0.00" stop-color="#a9d1ff"/><stop offset="0.10" stop-color="#bcd0ff"/><stop offset="0.20" stop-color="#cdcfff"/><stop offset="0.30" stop-color="#ddcdff"/><stop offset="0.40" stop-color="#edccff"/><stop offset="0.50" stop-color="#fccaff"/><stop offset="0.60" stop-color="#ffbff4"/><stop offset="0.70" stop-color="#ffb3e7"/><stop offset="0.80" stop-color="#ffa8dc"/><stop offset="0.90" stop-color="#ff9ed1"/><stop offset="1.00" stop-color="#ff95c8"/></linearGradient>
<rect x="406.5" y="1090" width="280.0" height="3.6" fill="url(#cier70)"/>
<linearGradient id="cier71" x1="0" x2="1" y1="0" y2="0"><stop offset="0.00" stop-color="#a9d0ff"/><stop offset="0.10" stop-color="#bccfff"/><stop offset="0.20" stop-color="#cdcdff"/><stop offset="0.30" stop-color="#ddccff"/><stop offset="0.40" stop-color="#edcaff"/><stop offset="0.50" stop-color="#fcc9ff"/><stop offset="0.60" stop-color="#ffbef4"/><stop offset="0.70" stop-color="#ffb2e7"/><stop offset="0.80" stop-color="#ffa7dc"/><stop offset="0.90" stop-color="#ff9dd1"/><stop offset="1.00" stop-color="#ff94c8"/></linearGradient>
<rect x="406.5" y="1093" width="280.0" height="3.6" fill="url(#cier71)"/>
<path d="M436.5 1098.3 L441.7 1094 Q532.5 1018.6 686.7 915.3 L692 911.7" fill="none" stroke="#000" stroke-width="3.2"/>
<ellipse cx="524.6" cy="1020.4" rx="5.1" ry="5.6" fill="#1a1a1a"/>
<ellipse cx="540.3" cy="992.4" rx="4.8" ry="5.9" fill="#333"/>
<rect x="539.5" y="977.5" width="13.5" height="16.5" fill="none" stroke="#000" stroke-width="2"/>
<ellipse cx="533.6" cy="995.5" rx="4.9" ry="6.1" fill="#555" stroke="#222" stroke-width="1.4"/>
<ellipse cx="533.6" cy="994" rx="4.9" ry="6.1" fill="#fff" stroke="#111" stroke-width="1.6"/>
</g>
<rect x="406.5" y="880" width="280.0" height="214" fill="none" stroke="#8a8a8a" stroke-width="2"/>
<line x1="399.5" y1="941.0" x2="406.5" y2="941.0" stroke="#cfcfcf" stroke-width="1.5"/>
<text x="398.00" y="947.50" font-size="18.31" fill="#d8d8d8" text-anchor="end" textLength="28.52" lengthAdjust="spacingAndGlyphs">0.34</text>
<line x1="399.5" y1="1027.4" x2="406.5" y2="1027.4" stroke="#cfcfcf" stroke-width="1.5"/>
<text x="398.00" y="1033.90" font-size="18.31" fill="#d8d8d8" text-anchor="end" textLength="28.52" lengthAdjust="spacingAndGlyphs">0.32</text>
<line x1="418.3" y1="1094" x2="418.3" y2="1102" stroke="#cfcfcf" stroke-width="1.5"/>
<text x="418.30" y="1121.00" font-size="18.31" fill="#d8d8d8" text-anchor="middle" textLength="28.52" lengthAdjust="spacingAndGlyphs">0.29</text>
<line x1="474.6" y1="1094" x2="474.6" y2="1102" stroke="#cfcfcf" stroke-width="1.5"/>
<text x="474.60" y="1121.00" font-size="18.31" fill="#d8d8d8" text-anchor="middle" textLength="20.37" lengthAdjust="spacingAndGlyphs">0.3</text>
<line x1="530.9" y1="1094" x2="530.9" y2="1102" stroke="#cfcfcf" stroke-width="1.5"/>
<text x="530.90" y="1121.00" font-size="18.31" fill="#d8d8d8" text-anchor="middle" textLength="28.52" lengthAdjust="spacingAndGlyphs">0.31</text>
<line x1="587.2" y1="1094" x2="587.2" y2="1102" stroke="#cfcfcf" stroke-width="1.5"/>
<text x="587.20" y="1121.00" font-size="18.31" fill="#d8d8d8" text-anchor="middle" textLength="28.52" lengthAdjust="spacingAndGlyphs">0.32</text>
<line x1="643.5" y1="1094" x2="643.5" y2="1102" stroke="#cfcfcf" stroke-width="1.5"/>
<text x="643.50" y="1121.00" font-size="18.31" fill="#d8d8d8" text-anchor="middle" textLength="28.52" lengthAdjust="spacingAndGlyphs">0.33</text>
<g clip-path="url(#tblclip)">
<rect x="699" y="843.5" width="1150" height="35.5" fill="url(#hdr)"/>
<rect x="699" y="843.5" width="16" height="35.5" fill="#000"/>
<rect x="699" y="879.00" width="1150" height="33.6" fill="#444444"/>
<rect x="699" y="879.00" width="16" height="33.6" fill="#1e1e1e"/>
<text x="719.30" y="903.70" font-size="23.69" fill="#efefef" textLength="61.30" lengthAdjust="spacingAndGlyphs">x: CIE31</text>
<text x="864.00" y="903.70" font-size="23.69" fill="#efefef" textLength="52.90" lengthAdjust="spacingAndGlyphs">0.2904</text>
<text x="956.97" y="903.70" font-size="23.69" fill="#efefef" textLength="52.90" lengthAdjust="spacingAndGlyphs">0.3091</text>
<text x="1049.94" y="903.70" font-size="23.69" fill="#efefef" textLength="52.90" lengthAdjust="spacingAndGlyphs">0.3115</text>
<text x="1142.91" y="903.70" font-size="23.69" fill="#efefef" textLength="52.90" lengthAdjust="spacingAndGlyphs">0.3107</text>
<text x="1235.88" y="903.70" font-size="23.69" fill="#efefef" textLength="52.90" lengthAdjust="spacingAndGlyphs">0.3106</text>
<text x="1328.85" y="903.70" font-size="23.69" fill="#efefef" textLength="52.90" lengthAdjust="spacingAndGlyphs">0.3105</text>
<text x="1421.82" y="903.70" font-size="23.69" fill="#efefef" textLength="52.90" lengthAdjust="spacingAndGlyphs">0.3106</text>
<text x="1514.79" y="903.70" font-size="23.69" fill="#efefef" textLength="52.90" lengthAdjust="spacingAndGlyphs">0.3105</text>
<text x="1607.76" y="903.70" font-size="23.69" fill="#efefef" textLength="52.90" lengthAdjust="spacingAndGlyphs">0.3106</text>
<text x="1700.73" y="903.70" font-size="23.69" fill="#efefef" textLength="52.90" lengthAdjust="spacingAndGlyphs">0.3106</text>
<text x="1793.70" y="903.70" font-size="23.69" fill="#efefef" textLength="52.90" lengthAdjust="spacingAndGlyphs">0.3107</text>
<rect x="699" y="912.35" width="1150" height="33.6" fill="#808080"/>
<rect x="699" y="912.35" width="16" height="33.6" fill="#202020"/>
<text x="719.30" y="937.05" font-size="23.69" fill="#efefef" textLength="61.30" lengthAdjust="spacingAndGlyphs">y: CIE31</text>
<text x="864.00" y="937.05" font-size="23.69" fill="#efefef" textLength="52.90" lengthAdjust="spacingAndGlyphs">0.2704</text>
<text x="956.97" y="937.05" font-size="23.69" fill="#efefef" textLength="52.90" lengthAdjust="spacingAndGlyphs">0.3207</text>
<text x="1049.94" y="937.05" font-size="23.69" fill="#efefef" textLength="52.90" lengthAdjust="spacingAndGlyphs">0.3274</text>
<text x="1142.91" y="937.05" font-size="23.69" fill="#efefef" textLength="52.90" lengthAdjust="spacingAndGlyphs">0.3273</text>
<text x="1235.88" y="937.05" font-size="23.69" fill="#efefef" textLength="52.90" lengthAdjust="spacingAndGlyphs">0.3274</text>
<text x="1328.85" y="937.05" font-size="23.69" fill="#efefef" textLength="52.90" lengthAdjust="spacingAndGlyphs">0.3270</text>
<text x="1421.82" y="937.05" font-size="23.69" fill="#efefef" textLength="52.90" lengthAdjust="spacingAndGlyphs">0.3272</text>
<text x="1514.79" y="937.05" font-size="23.69" fill="#efefef" textLength="52.90" lengthAdjust="spacingAndGlyphs">0.3271</text>
<text x="1607.76" y="937.05" font-size="23.69" fill="#efefef" textLength="52.90" lengthAdjust="spacingAndGlyphs">0.3269</text>
<text x="1700.73" y="937.05" font-size="23.69" fill="#efefef" textLength="52.90" lengthAdjust="spacingAndGlyphs">0.3268</text>
<text x="1793.70" y="937.05" font-size="23.69" fill="#efefef" textLength="52.90" lengthAdjust="spacingAndGlyphs">0.3270</text>
<rect x="699" y="945.70" width="1150" height="33.6" fill="#444444"/>
<rect x="699" y="945.70" width="16" height="33.6" fill="#1e1e1e"/>
<text x="719.30" y="970.40" font-size="23.69" fill="#efefef" textLength="9.50" lengthAdjust="spacingAndGlyphs">Y</text>
<text x="864.00" y="970.40" font-size="23.69" fill="#efefef" textLength="52.90" lengthAdjust="spacingAndGlyphs">0.5269</text>
<text x="956.97" y="970.40" font-size="23.69" fill="#efefef" textLength="52.90" lengthAdjust="spacingAndGlyphs">2.9334</text>
<text x="1049.94" y="970.40" font-size="23.69" fill="#efefef" textLength="62.52" lengthAdjust="spacingAndGlyphs">12.3629</text>
<text x="1142.91" y="970.40" font-size="23.69" fill="#efefef" textLength="62.52" lengthAdjust="spacingAndGlyphs">29.3922</text>
<text x="1235.88" y="970.40" font-size="23.69" fill="#efefef" textLength="62.52" lengthAdjust="spacingAndGlyphs">54.6645</text>
<text x="1328.85" y="970.40" font-size="23.69" fill="#efefef" textLength="62.52" lengthAdjust="spacingAndGlyphs">92.3145</text>
<text x="1421.82" y="970.40" font-size="23.69" fill="#efefef" textLength="72.14" lengthAdjust="spacingAndGlyphs">136.1319</text>
<text x="1514.79" y="970.40" font-size="23.69" fill="#efefef" textLength="72.14" lengthAdjust="spacingAndGlyphs">191.7360</text>
<text x="1607.76" y="970.40" font-size="23.69" fill="#efefef" textLength="72.14" lengthAdjust="spacingAndGlyphs">260.3659</text>
<text x="1700.73" y="970.40" font-size="23.69" fill="#efefef" textLength="72.14" lengthAdjust="spacingAndGlyphs">338.5957</text>
<text x="1793.70" y="970.40" font-size="23.69" fill="#efefef" textLength="72.14" lengthAdjust="spacingAndGlyphs">427.3085</text>
<rect x="699" y="979.05" width="1150" height="33.6" fill="#808080"/>
<rect x="699" y="979.05" width="16" height="33.6" fill="#202020"/>
<text x="719.30" y="1003.75" font-size="23.69" fill="#efefef" textLength="63.50" lengthAdjust="spacingAndGlyphs">Target Y</text>
<text x="864.00" y="1003.75" font-size="23.69" fill="#efefef" textLength="52.90" lengthAdjust="spacingAndGlyphs">0.0000</text>
<text x="956.97" y="1003.75" font-size="23.69" fill="#efefef" textLength="52.90" lengthAdjust="spacingAndGlyphs">4.4140</text>
<text x="1049.94" y="1003.75" font-size="23.69" fill="#efefef" textLength="62.52" lengthAdjust="spacingAndGlyphs">14.1459</text>
<text x="1142.91" y="1003.75" font-size="23.69" fill="#efefef" textLength="62.52" lengthAdjust="spacingAndGlyphs">30.8824</text>
<text x="1235.88" y="1003.75" font-size="23.69" fill="#efefef" textLength="62.52" lengthAdjust="spacingAndGlyphs">56.7758</text>
<text x="1328.85" y="1003.75" font-size="23.69" fill="#efefef" textLength="62.52" lengthAdjust="spacingAndGlyphs">92.2390</text>
<text x="1421.82" y="1003.75" font-size="23.69" fill="#efefef" textLength="72.14" lengthAdjust="spacingAndGlyphs">136.1177</text>
<text x="1514.79" y="1003.75" font-size="23.69" fill="#efefef" textLength="72.14" lengthAdjust="spacingAndGlyphs">190.2383</text>
<text x="1607.76" y="1003.75" font-size="23.69" fill="#efefef" textLength="72.14" lengthAdjust="spacingAndGlyphs">258.0206</text>
<text x="1700.73" y="1003.75" font-size="23.69" fill="#efefef" textLength="72.14" lengthAdjust="spacingAndGlyphs">338.1283</text>
<text x="1793.70" y="1003.75" font-size="23.69" fill="#efefef" textLength="72.14" lengthAdjust="spacingAndGlyphs">427.3085</text>
<rect x="699" y="1012.40" width="1150" height="33.6" fill="#444444"/>
<rect x="699" y="1012.40" width="16" height="33.6" fill="#1e1e1e"/>
<text x="719.30" y="1037.10" font-size="23.69" fill="#efefef" textLength="133.40" lengthAdjust="spacingAndGlyphs">Gamma Log/Log</text>
<text x="864.00" y="1037.10" font-size="23.69" fill="#efefef" textLength="52.90" lengthAdjust="spacingAndGlyphs">1.2778</text>
<text x="956.97" y="1037.10" font-size="23.69" fill="#efefef" textLength="52.90" lengthAdjust="spacingAndGlyphs">2.1818</text>
<text x="1049.94" y="1037.10" font-size="23.69" fill="#efefef" textLength="52.90" lengthAdjust="spacingAndGlyphs">2.2013</text>
<text x="1142.91" y="1037.10" font-size="23.69" fill="#efefef" textLength="52.90" lengthAdjust="spacingAndGlyphs">2.2112</text>
<text x="1235.88" y="1037.10" font-size="23.69" fill="#efefef" textLength="52.90" lengthAdjust="spacingAndGlyphs">2.2441</text>
<text x="1328.85" y="1037.10" font-size="23.69" fill="#efefef" textLength="52.90" lengthAdjust="spacingAndGlyphs">2.2232</text>
<text x="1421.82" y="1037.10" font-size="23.69" fill="#efefef" textLength="52.90" lengthAdjust="spacingAndGlyphs">2.2393</text>
<text x="1514.79" y="1037.10" font-size="23.69" fill="#efefef" textLength="52.90" lengthAdjust="spacingAndGlyphs">2.2293</text>
<text x="1607.76" y="1037.10" font-size="23.69" fill="#efefef" textLength="52.90" lengthAdjust="spacingAndGlyphs">2.2202</text>
<text x="1700.73" y="1037.10" font-size="23.69" fill="#efefef" textLength="52.90" lengthAdjust="spacingAndGlyphs">2.2552</text>
<text x="1793.70" y="1037.10" font-size="23.69" fill="#efefef" textLength="52.90" lengthAdjust="spacingAndGlyphs">2.2749</text>
<rect x="699" y="1045.75" width="1150" height="33.6" fill="#808080"/>
<rect x="699" y="1045.75" width="16" height="33.6" fill="#202020"/>
<text x="719.30" y="1070.45" font-size="23.69" fill="#efefef" textLength="31.00" lengthAdjust="spacingAndGlyphs">CCT</text>
<text x="864.00" y="1070.45" font-size="23.69" fill="#efefef" textLength="81.75" lengthAdjust="spacingAndGlyphs">9802.0000</text>
<text x="956.97" y="1070.45" font-size="23.69" fill="#efefef" textLength="81.75" lengthAdjust="spacingAndGlyphs">6783.0000</text>
<text x="1049.94" y="1070.45" font-size="23.69" fill="#efefef" textLength="81.75" lengthAdjust="spacingAndGlyphs">6580.0000</text>
<text x="1142.91" y="1070.45" font-size="23.69" fill="#efefef" textLength="81.75" lengthAdjust="spacingAndGlyphs">6628.0000</text>
<text x="1235.88" y="1070.45" font-size="23.69" fill="#efefef" textLength="81.75" lengthAdjust="spacingAndGlyphs">6634.0000</text>
<text x="1328.85" y="1070.45" font-size="23.69" fill="#efefef" textLength="81.75" lengthAdjust="spacingAndGlyphs">6643.0000</text>
<text x="1421.82" y="1070.45" font-size="23.69" fill="#efefef" textLength="81.75" lengthAdjust="spacingAndGlyphs">6634.0000</text>
<text x="1514.79" y="1070.45" font-size="23.69" fill="#efefef" textLength="81.75" lengthAdjust="spacingAndGlyphs">6639.0000</text>
<text x="1607.76" y="1070.45" font-size="23.69" fill="#efefef" textLength="81.75" lengthAdjust="spacingAndGlyphs">6635.0000</text>
<text x="1700.73" y="1070.45" font-size="23.69" fill="#efefef" textLength="81.75" lengthAdjust="spacingAndGlyphs">6636.0000</text>
<text x="1793.70" y="1070.45" font-size="23.69" fill="#efefef" textLength="81.75" lengthAdjust="spacingAndGlyphs">6633.0000</text>
<rect x="699" y="1079.10" width="1150" height="33.6" fill="#444444"/>
<rect x="699" y="1079.10" width="16" height="33.6" fill="#1e1e1e"/>
<text x="719.30" y="1103.80" font-size="23.69" fill="#efefef" textLength="64.50" lengthAdjust="spacingAndGlyphs">ΔE 2000</text>
<text x="864.00" y="1103.80" font-size="23.69" fill="#efefef" textLength="52.90" lengthAdjust="spacingAndGlyphs">1.4404</text>
<text x="956.97" y="1103.80" font-size="23.69" fill="#efefef" textLength="52.90" lengthAdjust="spacingAndGlyphs">2.0545</text>
<text x="1049.94" y="1103.80" font-size="23.69" fill="#efefef" textLength="52.90" lengthAdjust="spacingAndGlyphs">1.1703</text>
<text x="1142.91" y="1103.80" font-size="23.69" fill="#efefef" textLength="52.90" lengthAdjust="spacingAndGlyphs">0.7634</text>
<text x="1235.88" y="1103.80" font-size="23.69" fill="#efefef" textLength="52.90" lengthAdjust="spacingAndGlyphs">0.8847</text>
<text x="1328.85" y="1103.80" font-size="23.69" fill="#efefef" textLength="52.90" lengthAdjust="spacingAndGlyphs">0.7184</text>
<text x="1421.82" y="1103.80" font-size="23.69" fill="#efefef" textLength="52.90" lengthAdjust="spacingAndGlyphs">0.7608</text>
<text x="1514.79" y="1103.80" font-size="23.69" fill="#efefef" textLength="52.90" lengthAdjust="spacingAndGlyphs">0.9041</text>
<text x="1607.76" y="1103.80" font-size="23.69" fill="#efefef" textLength="52.90" lengthAdjust="spacingAndGlyphs">1.0171</text>
<text x="1700.73" y="1103.80" font-size="23.69" fill="#efefef" textLength="52.90" lengthAdjust="spacingAndGlyphs">1.1235</text>
<text x="1793.70" y="1103.80" font-size="23.69" fill="#efefef" textLength="52.90" lengthAdjust="spacingAndGlyphs">1.1316</text>
<text x="864.00" y="868.60" font-size="19.48" fill="#f0f0f0" textLength="8.45" lengthAdjust="spacingAndGlyphs">0</text>
<text x="956.97" y="868.60" font-size="19.48" fill="#f0f0f0" textLength="16.90" lengthAdjust="spacingAndGlyphs">10</text>
<text x="1049.94" y="868.60" font-size="19.48" fill="#f0f0f0" textLength="16.90" lengthAdjust="spacingAndGlyphs">20</text>
<text x="1142.91" y="868.60" font-size="19.48" fill="#f0f0f0" textLength="16.90" lengthAdjust="spacingAndGlyphs">30</text>
<text x="1235.88" y="868.60" font-size="19.48" fill="#f0f0f0" textLength="16.90" lengthAdjust="spacingAndGlyphs">40</text>
<text x="1328.85" y="868.60" font-size="19.48" fill="#f0f0f0" textLength="16.90" lengthAdjust="spacingAndGlyphs">50</text>
<text x="1421.82" y="868.60" font-size="19.48" fill="#f0f0f0" textLength="16.90" lengthAdjust="spacingAndGlyphs">60</text>
<text x="1514.79" y="868.60" font-size="19.48" fill="#f0f0f0" textLength="16.90" lengthAdjust="spacingAndGlyphs">70</text>
<text x="1607.76" y="868.60" font-size="19.48" fill="#f0f0f0" textLength="16.90" lengthAdjust="spacingAndGlyphs">80</text>
<text x="1700.73" y="868.60" font-size="19.48" fill="#f0f0f0" textLength="16.90" lengthAdjust="spacingAndGlyphs">90</text>
<text x="1793.70" y="868.60" font-size="19.48" fill="#f0f0f0" textLength="25.35" lengthAdjust="spacingAndGlyphs">100</text>
</g>
<rect x="715" y="1113" width="1134" height="20" rx="3" fill="#5a5a5a"/>
<rect x="734" y="1115" width="1062" height="16" rx="8" fill="#444"/>
<rect x="716" y="1114.5" width="16" height="17" rx="3" fill="#7a7a7a"/>
<path d="M726.5 1117.5 V1128.5 L720.5 1123 Z" fill="#444"/>
<rect x="1831" y="1114.5" width="16" height="17" rx="3" fill="#7a7a7a"/>
<path d="M1834.5 1117.5 V1128.5 L1840.5 1123 Z" fill="#444"/>
<rect x="0" y="1139.5" width="1858" height="61" fill="#2d2d2d"/>
<rect x="1.0" y="1140" width="138" height="59.5" rx="4" fill="url(#btn)"/>
<rect x="6.0" y="1145" width="128" height="34.5" rx="3" fill="#000000" stroke="rgba(0,0,0,0.25)" stroke-width="1"/>
<text x="70.00" y="1195.00" font-size="10.47" fill="#222" text-anchor="middle" font-weight="bold" textLength="4.95" lengthAdjust="spacingAndGlyphs">0</text>
<rect x="141.3" y="1140" width="138" height="59.5" rx="4" fill="url(#btn)"/>
<rect x="146.3" y="1145" width="128" height="34.5" rx="3" fill="#1a1a1a" stroke="rgba(0,0,0,0.25)" stroke-width="1"/>
<text x="210.35" y="1195.00" font-size="10.47" fill="#222" text-anchor="middle" font-weight="bold" textLength="9.89" lengthAdjust="spacingAndGlyphs">10</text>
<rect x="281.7" y="1140" width="138" height="59.5" rx="4" fill="url(#btn)"/>
<rect x="286.7" y="1145" width="128" height="34.5" rx="3" fill="#333333" stroke="rgba(0,0,0,0.25)" stroke-width="1"/>
<text x="350.70" y="1195.00" font-size="10.47" fill="#222" text-anchor="middle" font-weight="bold" textLength="9.89" lengthAdjust="spacingAndGlyphs">20</text>
<rect x="422.0" y="1140" width="138" height="59.5" rx="4" fill="url(#btn)"/>
<rect x="427.0" y="1145" width="128" height="34.5" rx="3" fill="#4c4c4c" stroke="rgba(0,0,0,0.25)" stroke-width="1"/>
<text x="491.05" y="1195.00" font-size="10.47" fill="#222" text-anchor="middle" font-weight="bold" textLength="9.89" lengthAdjust="spacingAndGlyphs">30</text>
<rect x="562.4" y="1140" width="138" height="59.5" rx="4" fill="url(#btn)"/>
<rect x="567.4" y="1145" width="128" height="34.5" rx="3" fill="#666666" stroke="rgba(0,0,0,0.25)" stroke-width="1"/>
<text x="631.40" y="1195.00" font-size="10.47" fill="#222" text-anchor="middle" font-weight="bold" textLength="9.89" lengthAdjust="spacingAndGlyphs">40</text>
<rect x="702.8" y="1140" width="138" height="59.5" rx="4" fill="url(#btn)"/>
<rect x="707.8" y="1145" width="128" height="34.5" rx="3" fill="#808080" stroke="rgba(0,0,0,0.25)" stroke-width="1"/>
<text x="771.75" y="1195.00" font-size="10.47" fill="#222" text-anchor="middle" font-weight="bold" textLength="9.89" lengthAdjust="spacingAndGlyphs">50</text>
<rect x="843.1" y="1140" width="138" height="59.5" rx="4" fill="url(#btn)"/>
<rect x="848.1" y="1145" width="128" height="34.5" rx="3" fill="#999999" stroke="rgba(0,0,0,0.25)" stroke-width="1"/>
<text x="912.10" y="1195.00" font-size="10.47" fill="#222" text-anchor="middle" font-weight="bold" textLength="9.89" lengthAdjust="spacingAndGlyphs">60</text>
<rect x="983.4" y="1140" width="138" height="59.5" rx="4" fill="url(#btn)"/>
<rect x="988.4" y="1145" width="128" height="34.5" rx="3" fill="#b3b3b3" stroke="rgba(0,0,0,0.25)" stroke-width="1"/>
<text x="1052.45" y="1195.00" font-size="10.47" fill="#222" text-anchor="middle" font-weight="bold" textLength="9.89" lengthAdjust="spacingAndGlyphs">70</text>
<rect x="1123.8" y="1140" width="138" height="59.5" rx="4" fill="url(#btn)"/>
<rect x="1128.8" y="1145" width="128" height="34.5" rx="3" fill="#cccccc" stroke="rgba(0,0,0,0.25)" stroke-width="1"/>
<text x="1192.80" y="1195.00" font-size="10.47" fill="#222" text-anchor="middle" font-weight="bold" textLength="9.89" lengthAdjust="spacingAndGlyphs">80</text>
<rect x="1264.1" y="1140" width="138" height="59.5" rx="4" fill="url(#btn)"/>
<rect x="1269.1" y="1145" width="128" height="34.5" rx="3" fill="#e6e6e6" stroke="rgba(0,0,0,0.25)" stroke-width="1"/>
<text x="1333.15" y="1195.00" font-size="10.47" fill="#222" text-anchor="middle" font-weight="bold" textLength="9.89" lengthAdjust="spacingAndGlyphs">90</text>
<rect x="1404.5" y="1139.5" width="138" height="60" rx="4" fill="#333"/>
<rect x="1409.5" y="1145" width="128" height="34.5" rx="3" fill="#fff"/>
<text x="1473.50" y="1195.00" font-size="10.47" fill="#f4f4f4" text-anchor="middle" font-weight="bold" textLength="14.84" lengthAdjust="spacingAndGlyphs">100</text>
<rect x="1545" y="1140" width="47" height="59" rx="4" fill="url(#btn)"/>
<line x1="1545" y1="1158" x2="1592" y2="1158" stroke="#555" stroke-width="1.5"/>
<circle cx="1568.5" cy="1149" r="7" fill="url(#knob)" opacity="0.6"/>
<path d="M1564.5 1151.5 H1572.5 L1568.5 1146.5 Z" fill="#333"/>
<rect x="1555" y="1164.5" width="28" height="28" rx="4" fill="none" stroke="#222" stroke-width="2.5"/>
<rect x="1562" y="1172" width="13" height="13" fill="#111"/>
<rect x="1593" y="1140" width="219" height="29.5" fill="url(#btn)"/>
<line x1="1637.8" y1="1140" x2="1637.8" y2="1169.5" stroke="#333" stroke-width="1.5"/>
<line x1="1681" y1="1140" x2="1681" y2="1169.5" stroke="#333" stroke-width="1.5"/>
<line x1="1724.4" y1="1140" x2="1724.4" y2="1169.5" stroke="#333" stroke-width="1.5"/>
<line x1="1768.2" y1="1140" x2="1768.2" y2="1169.5" stroke="#333" stroke-width="1.5"/>
<rect x="1811.6" y="1140" width="44.5" height="29.5" fill="#333"/>
<circle cx="1834" cy="1154" r="9.5" fill="#2a2a2a"/>
<circle cx="1615.5" cy="1154.5" r="9.5" fill="url(#knobb)"/>
<circle cx="1659.5" cy="1154.5" r="9.5" fill="url(#knobb)"/>
<circle cx="1703" cy="1154.5" r="9.5" fill="url(#knobb)"/>
<circle cx="1746.5" cy="1154.5" r="9.5" fill="url(#knobb)"/>
<circle cx="1790" cy="1154.5" r="9.5" fill="url(#knobb)"/>
<rect x="1611.5" y="1150.5" width="8" height="8" fill="#333"/>
<path d="M1656 1149.5 V1159.5 L1664 1154.5 Z" fill="#333"/>
<path d="M1699 1149 H1697.5 V1160 H1699 M1707 1149 H1708.5 V1160 H1707" stroke="#333" stroke-width="1.6" fill="none"/>
<path d="M1701 1154.5 H1705" stroke="#333" stroke-width="1.4" stroke-dasharray="1 1"/>
<path d="M1746.5 1154.5 c-1.5 -3 -5 -3 -5 0 c0 3 3.5 3 5 0 c1.5 -3 5 -3 5 0 c0 3 -3.5 3 -5 0" fill="none" stroke="#333" stroke-width="1.6"/>
<path d="M1785.5 1153 a4.5 4.5 0 0 1 8.5 -1 M1794.5 1156 a4.5 4.5 0 0 1 -8.5 1" fill="none" stroke="#333" stroke-width="1.8"/>
<path d="M1795.5 1149 L1795 1153 L1791.5 1152 Z M1784.5 1160 L1785 1156 L1788.5 1157 Z" fill="#333"/>
<rect x="1593" y="1170" width="263" height="29" rx="3" fill="url(#btn)"/>
<line x1="1724.4" y1="1170" x2="1724.4" y2="1199" stroke="#333" stroke-width="1.5"/>
<circle cx="1622.5" cy="1184" r="9.5" fill="url(#knobb)"/>
<path d="M1622 1180 L1618.5 1184 L1622 1188 M1626 1180 L1622.5 1184 L1626 1188" fill="none" stroke="#333" stroke-width="1.3"/>
<text x="1649.00" y="1192.80" font-size="22.53" fill="#2e2e2e" textLength="52.00" lengthAdjust="spacingAndGlyphs" stroke="#2e2e2e" stroke-width="0.5">Back</text>
<text x="1751.50" y="1192.80" font-size="22.53" fill="#2e2e2e" textLength="50.00" lengthAdjust="spacingAndGlyphs" stroke="#2e2e2e" stroke-width="0.5">Next</text>
<circle cx="1829" cy="1184" r="9.5" fill="url(#knobb)"/>
<path d="M1825 1180 L1828.5 1184 L1825 1188 M1829 1180 L1832.5 1184 L1829 1188" fill="none" stroke="#333" stroke-width="1.3"/>
</svg></body></html>
